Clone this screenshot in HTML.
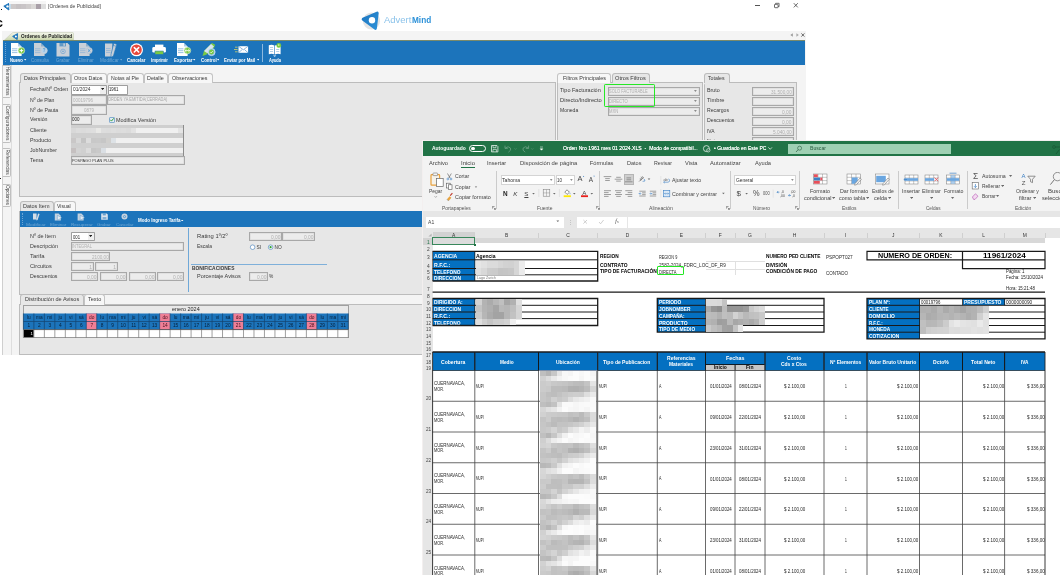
<!DOCTYPE html><html><head><meta charset="utf-8"><title>Ordenes de Publicidad</title><style>
html,body{margin:0;padding:0;background:#fff;}
body{width:1062px;height:575px;overflow:hidden;position:relative;font-family:"Liberation Sans",sans-serif;}
div,span,svg{position:absolute;box-sizing:border-box;}
.in{background:#fff;border:1px solid #9e9e9e;border-radius:0.8px;}
.ro{background:#ececec;border:1px solid #a8a8a8;box-shadow:inset 0 0 0 0.5px #d6d6d6;}
.tab{background:#f7f7f7;border:1px solid #c4c4c4;border-bottom:none;border-radius:3px 3px 0 0;}
.tabsel{background:#e7e7e7;border:1px solid #bcbcbc;border-bottom:none;border-radius:3px 3px 0 0;box-shadow:0 1.2px 0 #e7e7e7;}
.panel{background:#e7e7e7;border:1px solid #bcbcbc;}
</style></head><body><div id="root" style="left:0;top:0;width:1062px;height:575px;will-change:transform;">
<svg style="left:2.6px;top:1.6px" width="8" height="9" viewBox="0 0 8 9"><path d="M0.8 4.2 L6.4 1.2 L5.8 8 Z" fill="#1c74bb" stroke="#1c74bb" stroke-width="1" stroke-linejoin="round"/><circle cx="4.5" cy="4.4" r="1.2" fill="#fff"/></svg>
<div style="left:8.5px;top:1px;width:37px;height:3px;background:#f6f6f6;"></div>
<div style="left:8.5px;top:4px;width:2.5px;height:4.6px;background:#c4dcec;"></div>
<div style="left:11px;top:4px;width:5px;height:4.6px;background:#cdc9c9;"></div>
<div style="left:16px;top:4px;width:5px;height:4.6px;background:#c6c2c4;"></div>
<div style="left:21px;top:4px;width:5px;height:4.6px;background:#c9c5c7;"></div>
<div style="left:26px;top:4px;width:5px;height:4.6px;background:#cfcccc;"></div>
<div style="left:31px;top:4px;width:5px;height:4.6px;background:#dad8d6;"></div>
<div style="left:36px;top:4px;width:5px;height:4.6px;background:#a9a0a8;"></div>
<div style="left:41px;top:4px;width:5px;height:4.6px;background:#dedede;"></div>
<span style="left:48px;top:3.96px;font-size:4.9px;line-height:5.88px;color:#3c3c3c;white-space:nowrap;transform:scaleX(1.013);transform-origin:0 50%;">[Ordenes de Publicidad]</span>
<div style="left:0.8px;top:8.8px;width:1px;height:1.2px;background:#111;"></div>
<span style="top:14.9px;font-size:13.5px;line-height:16.2px;color:#000;white-space:nowrap;font-weight:bold;left:-4.6px;">c</span>
<div style="left:755.3px;top:5px;width:4.6px;height:1px;background:#555;"></div>
<svg style="left:773px;top:2px" width="8" height="8" viewBox="0 0 8 8"><rect x="1.5" y="2.3" width="3.6" height="3.4" rx="0.6" fill="none" stroke="#444" stroke-width="0.8"/><path d="M2.6 2.3V1.3H6.1V4.6H5.1" fill="none" stroke="#444" stroke-width="0.7"/></svg>
<svg style="left:792px;top:2px" width="8" height="8" viewBox="0 0 8 8"><path d="M1.8 1.2L5.8 5.4M5.8 1.2L1.8 5.4" stroke="#444" stroke-width="0.8"/></svg>
<svg style="left:358px;top:8px" width="26" height="26" viewBox="358 8 26 26"><defs><linearGradient id="lg" x1="0" y1="0" x2="1" y2="1"><stop offset="0" stop-color="#1e78c2"/><stop offset="1" stop-color="#2c8fd6"/></linearGradient></defs><circle cx="371.5" cy="21" r="8.6" fill="#d9d9d9" opacity="0.7"/><path d="M363.2 19.2 L377.2 13 L375.4 28.4 Z" fill="url(#lg)" stroke="url(#lg)" stroke-width="3" stroke-linejoin="round"/><circle cx="372" cy="20.3" r="3.2" fill="#fff"/></svg>
<span style="left:384px;top:16.02px;font-size:8.3px;line-height:9.96px;color:#8cc3ea;white-space:nowrap;transform:scaleX(1.142);transform-origin:0 50%;">Advert</span>
<span style="left:412.3px;top:16.02px;font-size:8.3px;line-height:9.96px;color:#2b90d8;white-space:nowrap;transform:scaleX(0.992);transform-origin:0 50%;font-weight:bold;">Mind</span>
<div style="left:2px;top:30.7px;width:803.5px;height:324px;background:#f4f4f4;"></div>
<svg style="left:2px;top:31px" width="74" height="10" viewBox="2 31 74 10"><defs><linearGradient id="tg" x1="0" y1="0" x2="0" y2="1"><stop offset="0" stop-color="#f4f6ec"/><stop offset="1" stop-color="#c6d3a4"/></linearGradient></defs><path d="M3.5 41 L11.6 33.4 Q12.4 32.5 13.6 32.5 H72.5 Q73.5 32.5 73.5 33.5 V41 Z" fill="url(#tg)" stroke="#c6ccb6" stroke-width="0.6"/><path d="M12.6 36.4 L17.6 33.6 L17.2 39.6 Z" fill="#1c74bb" stroke="#1c74bb" stroke-width="0.9" stroke-linejoin="round"/><circle cx="15.9" cy="36.5" r="1" fill="#fff"/></svg>
<span style="left:20.6px;top:33.08px;font-size:5.2px;line-height:6.24px;color:#222;white-space:nowrap;transform:scaleX(0.91);transform-origin:0 50%;font-weight:bold;">Ordenes de Publicidad</span>
<svg style="left:788px;top:32px" width="18" height="6" viewBox="788 32 18 6"><path d="M792.8 33.2v3.6l-2.4-1.8z" fill="#999"/><path d="M796.4 33.2v3.6l2.4-1.8z" fill="#aaa"/><path d="M801.4 33.4l3 3.2M804.4 33.4l-3 3.2" stroke="#333" stroke-width="0.7"/></svg>
<div style="left:3px;top:40.4px;width:802.4px;height:24.2px;background:#1c74bb;border-top:0.6px solid #7a8a6a;"></div>
<div style="left:5px;top:43px;width:1px;height:19px;border-left:1px dotted #6ea6d6;"></div>
<span style="left:10.25px;top:57.52px;font-size:4.8px;line-height:5.76px;color:#fff;white-space:nowrap;transform:scaleX(0.876);transform-origin:0 50%;font-weight:bold;">Nuevo</span>
<svg style="left:24.400000000000002px;top:59.4px" width="2.4" height="1.6" viewBox="0 0 2.4 1.6"><path d="M0 0h2.4l-1.2 1.6z" fill="#fff"/></svg>
<span style="left:31.25px;top:57.52px;font-size:4.8px;line-height:5.76px;color:rgba(255,255,255,0.36);white-space:nowrap;transform:scaleX(0.937);transform-origin:0 50%;">Consulta</span>
<span style="left:55.6px;top:57.52px;font-size:4.8px;line-height:5.76px;color:rgba(255,255,255,0.36);white-space:nowrap;transform:scaleX(0.924);transform-origin:0 50%;">Grabar</span>
<span style="left:77.5px;top:57.52px;font-size:4.8px;line-height:5.76px;color:rgba(255,255,255,0.36);white-space:nowrap;transform:scaleX(0.9);transform-origin:0 50%;">Eliminar</span>
<span style="left:100px;top:57.52px;font-size:4.8px;line-height:5.76px;color:rgba(255,255,255,0.36);white-space:nowrap;transform:scaleX(0.963);transform-origin:0 50%;">Modificar</span>
<svg style="left:120.1px;top:59.4px" width="2.4" height="1.6" viewBox="0 0 2.4 1.6"><path d="M0 0h2.4l-1.2 1.6z" fill="rgba(255,255,255,0.36)"/></svg>
<span style="left:127.25px;top:57.52px;font-size:4.8px;line-height:5.76px;color:#fff;white-space:nowrap;transform:scaleX(0.905);transform-origin:0 50%;font-weight:bold;">Cancelar</span>
<span style="left:150.6px;top:57.52px;font-size:4.8px;line-height:5.76px;color:#fff;white-space:nowrap;transform:scaleX(0.88);transform-origin:0 50%;font-weight:bold;">Imprimir</span>
<span style="left:173.5px;top:57.52px;font-size:4.8px;line-height:5.76px;color:#fff;white-space:nowrap;transform:scaleX(0.932);transform-origin:0 50%;font-weight:bold;">Exportar</span>
<svg style="left:193.20000000000002px;top:59.4px" width="2.4" height="1.6" viewBox="0 0 2.4 1.6"><path d="M0 0h2.4l-1.2 1.6z" fill="#fff"/></svg>
<span style="left:200.6px;top:57.52px;font-size:4.8px;line-height:5.76px;color:#fff;white-space:nowrap;transform:scaleX(0.917);transform-origin:0 50%;font-weight:bold;">Control</span>
<svg style="left:217.0px;top:59.4px" width="2.4" height="1.6" viewBox="0 0 2.4 1.6"><path d="M0 0h2.4l-1.2 1.6z" fill="#fff"/></svg>
<span style="left:224.4px;top:57.52px;font-size:4.8px;line-height:5.76px;color:#fff;white-space:nowrap;transform:scaleX(0.904);transform-origin:0 50%;font-weight:bold;">Enviar por Mail</span>
<svg style="left:256.5px;top:59.4px" width="2.4" height="1.6" viewBox="0 0 2.4 1.6"><path d="M0 0h2.4l-1.2 1.6z" fill="#fff"/></svg>
<span style="left:268.8px;top:57.52px;font-size:4.8px;line-height:5.76px;color:#fff;white-space:nowrap;transform:scaleX(0.828);transform-origin:0 50%;font-weight:bold;">Ayuda</span>
<div style="left:262px;top:44px;width:1px;height:18px;background:#8db9de;"></div>
<svg style="left:0;top:41px" width="300" height="24" viewBox="0 41 300 24"><path d="M11 43h7l3.6 3.6v9.4h-10.6z" fill="#fff"/><path d="M18 43v3.6h3.6z" fill="#1c74bb" opacity="0.35"/><path d="M12 48.8h5.4M12 50.7h5.4M12 52.6h5.4" stroke="#7fb2dc" stroke-width="0.8"/><circle cx="21.4" cy="50.6" r="3.3" fill="#7ac943" stroke="#fff" stroke-width="0.5"/><path d="M19.6 50.6h3.6M21.4 48.8v3.6" stroke="#fff" stroke-width="1"/><path d="M34 43h7l3.6 3.6v9.4h-10.6z" fill="#c9d0d8"/><path d="M41 43v3.6h3.6z" fill="#1c74bb" opacity="0.35"/><path d="M35 48.8h5.4M35 50.7h5.4M35 52.6h5.4" stroke="#8fb4d6" stroke-width="0.8"/><circle cx="44.2" cy="50.6" r="3.1" fill="#b9d4ea" stroke="#c9d0d8" stroke-width="0.7"/><text x="44.2" y="52.3" font-size="4.5" text-anchor="middle" fill="#5b9bd0" font-family="Liberation Sans" font-weight="bold">?</text><path d="M56.5 43h11l2 2v11.5h-13z" fill="#c9d0d8"/><rect x="59.5" y="43" width="6.5" height="3.4" fill="#1c74bb" opacity="0.6"/><rect x="63.4" y="43.4" width="1.5" height="2.4" fill="#c9d0d8"/><circle cx="63" cy="51.4" r="2.3" fill="none" stroke="#6fa4d2" stroke-width="0.7"/><circle cx="63" cy="51.4" r="0.8" fill="#6fa4d2"/><path d="M79 43h7l3.6 3.6v9.4h-10.6z" fill="#c9d0d8"/><path d="M86 43v3.6h3.6z" fill="#1c74bb" opacity="0.35"/><path d="M80 48.8h5.4M80 50.7h5.4M80 52.6h5.4" stroke="#8fb4d6" stroke-width="0.8"/><circle cx="89.2" cy="50.6" r="3.1" fill="#c9d0d8" stroke="#aebfd0" stroke-width="0.5"/><path d="M87.9 49.3l2.6 2.6M90.5 49.3l-2.6 2.6" stroke="#4f9bd8" stroke-width="0.9"/><path d="M105 43.5h7.4v13h-7.4z" fill="#c9d0d8"/><path d="M106 48.6h4.6M106 50.5h4.6M106 52.4h4.6" stroke="#8fb4d6" stroke-width="0.8"/><path d="M113.8 43.2l3 1-3.4 11.8-2.4 1.2 0-2.8z" fill="#c9d0d8" stroke="#1c74bb" stroke-width="0.6"/><path d="M113.4 45.4l2.6 0.9" stroke="#1c74bb" stroke-width="0.5"/><circle cx="136.5" cy="49.8" r="6.5" fill="#fff"/><circle cx="136.5" cy="49.8" r="5.3" fill="#e8483c"/><path d="M134.3 47.6l4.4 4.4M138.7 47.6l-4.4 4.4" stroke="#fff" stroke-width="1.5" stroke-linecap="round"/><rect x="155" y="44.6" width="8.4" height="3" fill="#fff"/><rect x="152.3" y="47" width="13.6" height="5.6" rx="1.4" fill="#fff"/><rect x="155" y="51" width="8.4" height="3.4" fill="#7ac943" stroke="#1c74bb" stroke-width="0.5"/><path d="M177 43h7l3.6 3.6v9.4h-10.6z" fill="#fff"/><path d="M184 43v3.6h3.6z" fill="#1c74bb" opacity="0.35"/><path d="M178 48.8h5.4M178 50.7h5.4M178 52.6h5.4" stroke="#7fb2dc" stroke-width="0.8"/><circle cx="187.4" cy="50.6" r="3.3" fill="#7ac943" stroke="#fff" stroke-width="0.5"/><path d="M185.2 50.6h4.4M188.3 49.2l1.5 1.4-1.5 1.4M186.5 49.2l-1.5 1.4 1.5 1.4" stroke="#fff" stroke-width="0.8" fill="none"/><path d="M202.5 56l1.5-5 8-8 3.2 1.8-1 2.4-7.6 7.2z" fill="#7ac943"/><path d="M204 51l7-7 3 2.4-6.6 6.8z" fill="#d7e4f0"/><circle cx="211.5" cy="52" r="3.6" fill="#8cc0e6" stroke="#d7e4f0" stroke-width="0.8"/><circle cx="211.5" cy="52" r="2.4" fill="#7ac943"/><path d="M210.3 52l0.9 0.9 1.6-1.8" stroke="#fff" stroke-width="0.7" fill="none"/><rect x="238.5" y="46.2" width="9.6" height="6.6" fill="#fff"/><path d="M238.5 46.2l4.8 3.6 4.8-3.6M238.5 52.8l3.6-3.2M248.1 52.8l-3.6-3.2" stroke="#1c74bb" stroke-width="0.5" fill="none"/><path d="M235 47.2h2.6M234 49.5h3.6M235 51.8h2.6" stroke="#d8d36a" stroke-width="0.8"/><path d="M268.8 45.2q3-1.2 5.6 0.4v9q-2.6-1.4-5.6-0.3z" fill="#fff"/><path d="M280.6 45.2q-3-1.2-5.6 0.4v9q2.6-1.4 5.6-0.3z" fill="#fff"/><path d="M270 47.5h3M270 49.5h3M270 51.5h3M276.2 49.5h3M276.2 51.5h3" stroke="#1c74bb" stroke-width="0.5" opacity="0.7"/><path d="M273 55.4l1.7 1.4 1.7-1.4" fill="#fff"/><circle cx="278.8" cy="45.4" r="2.4" fill="#7ac943"/><path d="M278.8 44.2v1.8" stroke="#fff" stroke-width="0.7"/></svg>
<div style="left:2px;top:65px;width:1.2px;height:290px;background:#cfcfcf;"></div>
<div style="left:3px;top:64.6px;width:8px;height:33.2px;background:#f6f6f6;border:0.8px solid #c0c0c0;border-left:none;border-radius:0 2px 2px 0;"></div>
<span style="left:7.3px;top:81.19999999999999px;font-size:4.7px;line-height:6px;color:#444;white-space:nowrap;letter-spacing:0.066px;transform:translate(-50%,-50%) rotate(90deg);">Herramientas</span>
<div style="left:3px;top:103.5px;width:8px;height:39px;background:#f6f6f6;border:0.8px solid #c0c0c0;border-left:none;border-radius:0 2px 2px 0;"></div>
<span style="left:7.3px;top:123.0px;font-size:4.7px;line-height:6px;color:#444;white-space:nowrap;letter-spacing:0.069px;transform:translate(-50%,-50%) rotate(90deg);">Configuraciones</span>
<div style="left:3px;top:147.5px;width:8px;height:29px;background:#f6f6f6;border:0.8px solid #c0c0c0;border-left:none;border-radius:0 2px 2px 0;"></div>
<span style="left:7.3px;top:162.0px;font-size:4.7px;line-height:6px;color:#444;white-space:nowrap;letter-spacing:-0.007px;transform:translate(-50%,-50%) rotate(90deg);">Referencias</span>
<div style="left:3px;top:183.5px;width:8px;height:23.5px;background:#f6f6f6;border:0.8px solid #c0c0c0;border-left:none;border-radius:0 2px 2px 0;"></div>
<span style="left:7.3px;top:195.25px;font-size:4.7px;line-height:6px;color:#444;white-space:nowrap;letter-spacing:0.018px;transform:translate(-50%,-50%) rotate(90deg);">Opciones</span>
<div style="left:0px;top:177.6px;width:1.2px;height:1.4px;background:#222;"></div>
<div style="left:11.4px;top:65px;width:0.8px;height:290px;background:#dedede;"></div>
<div class="panel" style="left:19px;top:82.2px;width:537px;height:115.3px;"></div>
<div class="tabsel" style="left:20px;top:72.5px;width:50.5px;height:10.5px;"></div>
<span style="left:23.75px;top:74.79px;font-size:5.6px;line-height:6.72px;color:#3a3a3a;white-space:nowrap;transform:scaleX(0.958);transform-origin:0 50%;">Datos Principales</span>
<div class="tab" style="left:71px;top:72.5px;width:35.5px;height:10.5px;"></div>
<span style="left:74px;top:74.79px;font-size:5.6px;line-height:6.72px;color:#3a3a3a;white-space:nowrap;transform:scaleX(0.954);transform-origin:0 50%;">Otros Datos</span>
<div class="tab" style="left:107px;top:72.5px;width:36.5px;height:10.5px;"></div>
<span style="left:110.75px;top:74.79px;font-size:5.6px;line-height:6.72px;color:#3a3a3a;white-space:nowrap;transform:scaleX(0.927);transform-origin:0 50%;">Notas al Pie</span>
<div class="tab" style="left:144px;top:72.5px;width:23.5px;height:10.5px;"></div>
<span style="left:147px;top:74.79px;font-size:5.6px;line-height:6.72px;color:#3a3a3a;white-space:nowrap;transform:scaleX(0.961);transform-origin:0 50%;">Detalle</span>
<div class="tab" style="left:168px;top:72.5px;width:44.5px;height:10.5px;"></div>
<span style="left:172px;top:74.79px;font-size:5.6px;line-height:6.72px;color:#3a3a3a;white-space:nowrap;transform:scaleX(0.95);transform-origin:0 50%;">Observaciones</span>
<span style="left:30px;top:86.24px;font-size:5.6px;line-height:6.72px;color:#3a3a3a;white-space:nowrap;transform:scaleX(0.948);transform-origin:0 50%;">Fecha/N&ordm; Orden</span>
<span style="left:30px;top:96.64px;font-size:5.6px;line-height:6.72px;color:#3a3a3a;white-space:nowrap;transform:scaleX(0.92);transform-origin:0 50%;">N&ordm; de Plan</span>
<span style="left:30px;top:106.64px;font-size:5.6px;line-height:6.72px;color:#3a3a3a;white-space:nowrap;transform:scaleX(0.94);transform-origin:0 50%;">N&ordm; de Pauta</span>
<span style="left:30px;top:116.24px;font-size:5.6px;line-height:6.72px;color:#3a3a3a;white-space:nowrap;transform:scaleX(0.937);transform-origin:0 50%;">Versi&oacute;n</span>
<span style="left:30px;top:126.64px;font-size:5.6px;line-height:6.72px;color:#3a3a3a;white-space:nowrap;transform:scaleX(0.961);transform-origin:0 50%;">Cliente</span>
<span style="left:30px;top:136.64px;font-size:5.6px;line-height:6.72px;color:#3a3a3a;white-space:nowrap;transform:scaleX(0.948);transform-origin:0 50%;">Producto</span>
<span style="left:30px;top:146.64px;font-size:5.6px;line-height:6.72px;color:#3a3a3a;white-space:nowrap;transform:scaleX(0.933);transform-origin:0 50%;">JobNumber</span>
<span style="left:30px;top:156.64px;font-size:5.6px;line-height:6.72px;color:#3a3a3a;white-space:nowrap;transform:scaleX(0.968);transform-origin:0 50%;">Tema</span>
<div class="in" style="left:71px;top:85px;width:36px;height:9.5px;"></div>
<div style="left:99.6px;top:86px;width:6.4px;height:7.5px;background:#efefef;"></div>
<span style="left:72.5px;top:87.18px;font-size:4.7px;line-height:5.64px;color:#333;white-space:nowrap;transform:scaleX(1.03);transform-origin:0 50%;">01/2024</span>
<svg style="left:101px;top:88.2px" width="3.2" height="2.2" viewBox="0 0 3.2 2.2"><path d="M0 0h3.2l-1.6 2.2z" fill="#222"/></svg>
<div class="in" style="left:107.5px;top:85px;width:20px;height:9.5px;"></div>
<span style="left:108.9px;top:87.18px;font-size:4.7px;line-height:5.64px;color:#222;white-space:nowrap;transform:scaleX(0.909);transform-origin:0 50%;">1961</span>
<div class="ro" style="left:71px;top:95.2px;width:35.5px;height:9.4px;"></div>
<span style="left:72.5px;top:97.1px;font-size:5px;line-height:6.0px;color:#b2b2b2;white-space:nowrap;transform:scaleX(0.899);transform-origin:0 50%;">00019796</span>
<div class="ro" style="left:107px;top:95.2px;width:77.5px;height:9.4px;"></div>
<span style="left:108px;top:97.22px;font-size:4.8px;line-height:5.76px;color:#a8a8a8;white-space:nowrap;transform:scaleX(0.828);transform-origin:0 50%;">ORDEN YA EMITIDA(CERRADA)</span>
<div class="ro" style="left:71px;top:105.4px;width:35.5px;height:9.4px;"></div>
<span style="left:83.75px;top:107.2px;font-size:5px;line-height:6.0px;color:#b2b2b2;white-space:nowrap;transform:scaleX(0.899);transform-origin:0 50%;">0879</span>
<div class="ro" style="left:71px;top:115.3px;width:21px;height:9.4px;"></div>
<span style="left:72px;top:117.3px;font-size:4.5px;line-height:5.4px;color:#222;white-space:nowrap;transform:scaleX(0.999);transform-origin:0 50%;">000</span>
<div style="left:109px;top:117px;width:5.6px;height:5.6px;background:#e2edf7;border:1px solid #86add0;border-radius:1px;"></div>
<svg style="left:109px;top:117px" width="6" height="6" viewBox="0 0 6 6"><path d="M1.3 2.8l1.2 1.3 2.2-2.8" stroke="#2a9a2a" stroke-width="0.9" fill="none"/></svg>
<span style="left:115.5px;top:117.44px;font-size:5.6px;line-height:6.72px;color:#3a3a3a;white-space:nowrap;transform:scaleX(0.974);transform-origin:0 50%;">Modifica Versi&oacute;n</span>
<div style="left:71.2px;top:125px;width:113.3px;height:30.8px;background:#cfcfcf;border-right:1px solid #8c8c8c;"></div>
<div style="left:71.2px;top:127.6px;width:112.3px;height:5.6px;background:#f0f0f0;"></div>
<div style="left:71.2px;top:127.6px;width:5px;height:5.6px;background:#d8d8d8;"></div>
<div style="left:76.2px;top:127.6px;width:5px;height:5.6px;background:#dcdcdc;"></div>
<div style="left:81.2px;top:127.6px;width:5px;height:5.6px;background:#dbdbdb;"></div>
<div style="left:86.2px;top:127.6px;width:5px;height:5.6px;background:#dddddd;"></div>
<div style="left:91.2px;top:127.6px;width:5px;height:5.6px;background:#dedede;"></div>
<div style="left:96.2px;top:127.6px;width:5px;height:5.6px;background:#e8e8e6;"></div>
<div style="left:101.2px;top:127.6px;width:5px;height:5.6px;background:#dddddd;"></div>
<div style="left:106.2px;top:127.6px;width:5px;height:5.6px;background:#dcdcdc;"></div>
<div style="left:111.2px;top:127.6px;width:5px;height:5.6px;background:#dedede;"></div>
<div style="left:116.2px;top:127.6px;width:5px;height:5.6px;background:#dcdcdc;"></div>
<div style="left:121.2px;top:127.6px;width:5px;height:5.6px;background:#dddddd;"></div>
<div style="left:126.2px;top:127.6px;width:5px;height:5.6px;background:#dbdbdb;"></div>
<div style="left:131.2px;top:127.6px;width:5px;height:5.6px;background:#e2e2e2;"></div>
<div style="left:178.4px;top:127.6px;width:5px;height:5.6px;background:#e4e4e4;"></div>
<div style="left:71.2px;top:137.6px;width:112.3px;height:5.4px;background:#f0f0f0;"></div>
<div style="left:71.2px;top:137.6px;width:5px;height:5.4px;background:#c9c7c7;"></div>
<div style="left:76.2px;top:137.6px;width:5px;height:5.4px;background:#d8d8d8;"></div>
<div style="left:81.2px;top:137.6px;width:5px;height:5.4px;background:#c4c4c4;"></div>
<div style="left:86.2px;top:137.6px;width:5px;height:5.4px;background:#dcdcdc;"></div>
<div style="left:91.2px;top:137.6px;width:5px;height:5.4px;background:#c8c8c8;"></div>
<div style="left:96.2px;top:137.6px;width:5px;height:5.4px;background:#c9c9c9;"></div>
<div style="left:101.2px;top:137.6px;width:5px;height:5.4px;background:#c6c6c6;"></div>
<div style="left:106.2px;top:137.6px;width:5px;height:5.4px;background:#d0cfcd;"></div>
<div style="left:111.2px;top:137.6px;width:5px;height:5.4px;background:#dde2e6;"></div>
<div style="left:71.2px;top:147.6px;width:112.3px;height:5.4px;background:#f0f0f0;"></div>
<div style="left:71.2px;top:147.6px;width:5px;height:5.4px;background:#c5c0c0;"></div>
<div style="left:76.2px;top:147.6px;width:5px;height:5.4px;background:#d3d3d3;"></div>
<div style="left:81.2px;top:147.6px;width:5px;height:5.4px;background:#d0d0d0;"></div>
<div style="left:86.2px;top:147.6px;width:5px;height:5.4px;background:#dcdcdc;"></div>
<div style="left:91.2px;top:147.6px;width:5px;height:5.4px;background:#c6c6c6;"></div>
<div style="left:96.2px;top:147.6px;width:5px;height:5.4px;background:#c9c9c9;"></div>
<div style="left:101.2px;top:147.6px;width:5px;height:5.4px;background:#dadfe4;"></div>
<div class="ro" style="left:71px;top:155.8px;width:113.5px;height:9px;"></div>
<span style="left:72px;top:157.96px;font-size:4.4px;line-height:5.28px;color:#333;white-space:nowrap;transform:scaleX(0.886);transform-origin:0 50%;">POSPAGO PLAN PLUS</span>
<div class="panel" style="left:557px;top:82.2px;width:146px;height:120px;"></div>
<div class="tab" style="left:557px;top:72.5px;width:53.5px;height:10.5px;"></div>
<span style="left:562.5px;top:74.84px;font-size:5.6px;line-height:6.72px;color:#3a3a3a;white-space:nowrap;transform:scaleX(0.973);transform-origin:0 50%;">Filtros Principales</span>
<div class="tabsel" style="left:611.5px;top:72.5px;width:38.5px;height:10.5px;"></div>
<span style="left:615px;top:74.84px;font-size:5.6px;line-height:6.72px;color:#3a3a3a;white-space:nowrap;transform:scaleX(1.008);transform-origin:0 50%;">Otros Filtros</span>
<span style="left:560px;top:87.04px;font-size:5.6px;line-height:6.72px;color:#3a3a3a;white-space:nowrap;transform:scaleX(0.982);transform-origin:0 50%;">Tipo Facturaci&oacute;n</span>
<span style="left:560px;top:97.04px;font-size:5.6px;line-height:6.72px;color:#3a3a3a;white-space:nowrap;transform:scaleX(1.024);transform-origin:0 50%;">Directo/Indirecto</span>
<span style="left:560px;top:107.04px;font-size:5.6px;line-height:6.72px;color:#3a3a3a;white-space:nowrap;transform:scaleX(0.902);transform-origin:0 50%;">Moneda</span>
<div class="ro" style="left:607.5px;top:87.4px;width:92px;height:8.8px;"></div>
<span style="left:608.75px;top:89.06px;font-size:4.9px;line-height:5.88px;color:#aeaeae;white-space:nowrap;transform:scaleX(0.823);transform-origin:0 50%;">SOLO FACTURABLE</span>
<svg style="left:694.2px;top:90.4px" width="2.8" height="2" viewBox="0 0 2.8 2"><path d="M0 0h2.8l-1.4 2z" fill="#8a8a8a"/></svg>
<div class="ro" style="left:607.5px;top:97.4px;width:92px;height:8.8px;"></div>
<span style="left:608.75px;top:99.06px;font-size:4.9px;line-height:5.88px;color:#aeaeae;white-space:nowrap;transform:scaleX(0.854);transform-origin:0 50%;">DIRECTO</span>
<svg style="left:694.2px;top:100.4px" width="2.8" height="2" viewBox="0 0 2.8 2"><path d="M0 0h2.8l-1.4 2z" fill="#8a8a8a"/></svg>
<div class="ro" style="left:607.5px;top:107.4px;width:92px;height:8.8px;"></div>
<span style="left:608.75px;top:109.06px;font-size:4.9px;line-height:5.88px;color:#aeaeae;white-space:nowrap;transform:scaleX(0.849);transform-origin:0 50%;">MXN</span>
<svg style="left:694.2px;top:110.4px" width="2.8" height="2" viewBox="0 0 2.8 2"><path d="M0 0h2.8l-1.4 2z" fill="#8a8a8a"/></svg>
<div style="left:603.8px;top:83.6px;width:51px;height:23.6px;border:1.2px solid #25e825;border-radius:1.2px;"></div>
<div class="panel" style="left:704px;top:82.2px;width:93px;height:120px;"></div>
<div class="tabsel" style="left:704px;top:72.5px;width:25.5px;height:10.5px;"></div>
<span style="left:708px;top:74.84px;font-size:5.6px;line-height:6.72px;color:#3a3a3a;white-space:nowrap;transform:scaleX(0.93);transform-origin:0 50%;">Totales</span>
<span style="left:707px;top:87.34px;font-size:5.6px;line-height:6.72px;color:#3a3a3a;white-space:nowrap;transform:scaleX(0.953);transform-origin:0 50%;">Bruto</span>
<div class="ro" style="left:752px;top:87.0px;width:41.5px;height:9px;"></div>
<span style="left:770.65px;top:88.7px;font-size:5px;line-height:6.0px;color:#aeaeae;white-space:nowrap;transform:scaleX(0.933);transform-origin:0 50%;">31.500,00</span>
<span style="left:707px;top:97.39px;font-size:5.6px;line-height:6.72px;color:#3a3a3a;white-space:nowrap;transform:scaleX(1.016);transform-origin:0 50%;">Timbre</span>
<div class="ro" style="left:752px;top:97.05px;width:41.5px;height:9px;"></div>
<span style="left:707px;top:107.44px;font-size:5.6px;line-height:6.72px;color:#3a3a3a;white-space:nowrap;transform:scaleX(0.918);transform-origin:0 50%;">Recargos</span>
<div class="ro" style="left:752px;top:107.10000000000001px;width:41.5px;height:9px;"></div>
<span style="left:781.9px;top:108.8px;font-size:5px;line-height:6.0px;color:#aeaeae;white-space:nowrap;transform:scaleX(0.976);transform-origin:0 50%;">0,00</span>
<span style="left:707px;top:117.49px;font-size:5.6px;line-height:6.72px;color:#3a3a3a;white-space:nowrap;transform:scaleX(0.93);transform-origin:0 50%;">Descuentos</span>
<div class="ro" style="left:752px;top:117.15px;width:41.5px;height:9px;"></div>
<span style="left:781.9px;top:118.85px;font-size:5px;line-height:6.0px;color:#aeaeae;white-space:nowrap;transform:scaleX(0.976);transform-origin:0 50%;">0,00</span>
<span style="left:707px;top:127.54px;font-size:5.6px;line-height:6.72px;color:#3a3a3a;white-space:nowrap;transform:scaleX(0.871);transform-origin:0 50%;">IVA</span>
<div class="ro" style="left:752px;top:127.2px;width:41.5px;height:9px;"></div>
<span style="left:772.65px;top:128.9px;font-size:5px;line-height:6.0px;color:#aeaeae;white-space:nowrap;transform:scaleX(0.963);transform-origin:0 50%;">5.040,00</span>
<span style="left:707px;top:137.59px;font-size:5.6px;line-height:6.72px;color:#3a3a3a;white-space:nowrap;transform:scaleX(0.909);transform-origin:0 50%;">Neto</span>
<div class="ro" style="left:752px;top:137.25px;width:41.5px;height:9px;"></div>
<span style="left:770.65px;top:138.95px;font-size:5px;line-height:6.0px;color:#aeaeae;white-space:nowrap;transform:scaleX(0.933);transform-origin:0 50%;">36.540,00</span>
<div class="panel" style="left:19px;top:210.5px;width:404px;height:84px;"></div>
<div class="tabsel" style="left:20px;top:200.5px;width:33.5px;height:10.5px;"></div>
<span style="left:23px;top:202.84px;font-size:5.6px;line-height:6.72px;color:#3a3a3a;white-space:nowrap;transform:scaleX(0.979);transform-origin:0 50%;">Datos Item</span>
<div class="tab" style="left:54px;top:200.5px;width:21.5px;height:10.5px;"></div>
<span style="left:57px;top:202.84px;font-size:5.6px;line-height:6.72px;color:#3a3a3a;white-space:nowrap;transform:scaleX(0.907);transform-origin:0 50%;">Visual</span>
<div style="left:20px;top:211px;width:403px;height:16px;background:#1c74bb;"></div>
<div style="left:22px;top:213px;width:1px;height:12px;border-left:1px dotted #6ea6d6;"></div>
<span style="left:25.75px;top:221.56px;font-size:4.4px;line-height:5.28px;color:rgba(255,255,255,0.34);white-space:nowrap;transform:scaleX(1.106);transform-origin:0 50%;">Modificar</span>
<span style="left:50px;top:221.56px;font-size:4.4px;line-height:5.28px;color:rgba(255,255,255,0.34);white-space:nowrap;transform:scaleX(1.022);transform-origin:0 50%;">Eliminar</span>
<span style="left:70.75px;top:221.56px;font-size:4.4px;line-height:5.28px;color:rgba(255,255,255,0.34);white-space:nowrap;transform:scaleX(1.059);transform-origin:0 50%;">Recuperar</span>
<span style="left:97px;top:221.56px;font-size:4.4px;line-height:5.28px;color:rgba(255,255,255,0.34);white-space:nowrap;transform:scaleX(1.004);transform-origin:0 50%;">Grabar</span>
<span style="left:115.5px;top:221.56px;font-size:4.4px;line-height:5.28px;color:rgba(255,255,255,0.34);white-space:nowrap;transform:scaleX(0.994);transform-origin:0 50%;">Cancelar</span>
<span style="left:137.5px;top:217.5px;font-size:4.5px;line-height:5.4px;color:#fff;white-space:nowrap;transform:scaleX(0.996);transform-origin:0 50%;font-weight:bold;">Modo Ingreso Tarifa</span>
<svg style="left:181.2px;top:219.6px" width="2.4" height="1.6" viewBox="0 0 2.4 1.6"><path d="M0 0h2.4l-1.2 1.6z" fill="#fff"/></svg>
<svg style="left:20px;top:211px" width="140" height="16" viewBox="20 211 140 16"><path d="M33 213.6h3.6v6h-3.6z M38 213.4l1.6 0.5-2 6-1.3 0.6z" fill="#d5dde6"/><path d="M54.8 213.6h3.8l2.2 2.2v4.6h-6z" fill="#c3d2e0"/><path d="M57.4 215.4l4.6 2.4-4.6 2.4z" fill="#e4ebf2" stroke="#1c74bb" stroke-width="0.3"/><path d="M77.6 213.6h3.8l2.2 2.2v4.6h-6z" fill="#c3d2e0"/><path d="M80.2 215.4l4.6 2.4-4.6 2.4z" fill="#e4ebf2" stroke="#1c74bb" stroke-width="0.3"/><path d="M101.2 213.6h5.6l1 1v5.2h-6.6z" fill="#dbe3ec"/><rect x="102.8" y="213.6" width="3" height="1.8" fill="#1c74bb" opacity="0.6"/><rect x="102.6" y="217" width="3.8" height="2.2" fill="#1c74bb" opacity="0.45"/><circle cx="124.5" cy="216.6" r="3" fill="#c9d4df"/><circle cx="124.5" cy="216.6" r="1.6" fill="#1c74bb" opacity="0.5"/><path d="M123.7 215.8l1.6 1.6M125.3 215.8l-1.6 1.6" stroke="#dfe6ee" stroke-width="0.5"/></svg>
<span style="left:30px;top:232.64px;font-size:5.6px;line-height:6.72px;color:#3a3a3a;white-space:nowrap;transform:scaleX(0.978);transform-origin:0 50%;">N&ordm; de Item</span>
<span style="left:30px;top:242.64px;font-size:5.6px;line-height:6.72px;color:#3a3a3a;white-space:nowrap;transform:scaleX(0.957);transform-origin:0 50%;">Descripci&oacute;n</span>
<span style="left:30px;top:253.14px;font-size:5.6px;line-height:6.72px;color:#3a3a3a;white-space:nowrap;transform:scaleX(1.059);transform-origin:0 50%;">Tarifa</span>
<span style="left:30px;top:263.14px;font-size:5.6px;line-height:6.72px;color:#3a3a3a;white-space:nowrap;transform:scaleX(0.998);transform-origin:0 50%;">Circuitos</span>
<span style="left:30px;top:273.14px;font-size:5.6px;line-height:6.72px;color:#3a3a3a;white-space:nowrap;transform:scaleX(0.93);transform-origin:0 50%;">Descuentos</span>
<div class="in" style="left:71px;top:232.3px;width:23.5px;height:8.9px;"></div>
<div style="left:87.6px;top:233.2px;width:6px;height:7px;background:#efefef;"></div>
<span style="left:72.5px;top:233.9px;font-size:5px;line-height:6.0px;color:#222;white-space:nowrap;transform:scaleX(0.839);transform-origin:0 50%;">001</span>
<svg style="left:89px;top:235.2px" width="3.2" height="2.2" viewBox="0 0 3.2 2.2"><path d="M0 0h3.2l-1.6 2.2z" fill="#222"/></svg>
<div class="ro" style="left:71px;top:242.3px;width:113px;height:8.9px;"></div>
<span style="left:72px;top:244.02px;font-size:4.8px;line-height:5.76px;color:#b0b0b0;white-space:nowrap;transform:scaleX(0.833);transform-origin:0 50%;">INTEGRAL</span>
<div class="ro" style="left:71px;top:252.3px;width:38.5px;height:8.9px;"></div>
<span style="left:92px;top:254.0px;font-size:5px;line-height:6.0px;color:#b0b0b0;white-space:nowrap;transform:scaleX(0.927);transform-origin:0 50%;">2100,00</span>
<div class="ro" style="left:71px;top:262.3px;width:22.5px;height:8.9px;"></div>
<span style="top:264.0px;font-size:5px;line-height:6.0px;color:#b0b0b0;white-space:nowrap;right:970px;text-align:right;">1</span>
<div class="ro" style="left:95px;top:262.3px;width:22.5px;height:8.9px;"></div>
<span style="top:264.0px;font-size:5px;line-height:6.0px;color:#b0b0b0;white-space:nowrap;right:946px;text-align:right;">1</span>
<div class="ro" style="left:71px;top:272.3px;width:26.5px;height:8.9px;"></div>
<span style="left:86.5px;top:274.0px;font-size:5px;line-height:6.0px;color:#b0b0b0;white-space:nowrap;transform:scaleX(0.976);transform-origin:0 50%;">0,00</span>
<div class="ro" style="left:100px;top:272.3px;width:26.5px;height:8.9px;"></div>
<span style="left:115.5px;top:274.0px;font-size:5px;line-height:6.0px;color:#b0b0b0;white-space:nowrap;transform:scaleX(0.976);transform-origin:0 50%;">0,00</span>
<div class="ro" style="left:129px;top:272.3px;width:26.5px;height:8.9px;"></div>
<span style="left:144.5px;top:274.0px;font-size:5px;line-height:6.0px;color:#b0b0b0;white-space:nowrap;transform:scaleX(0.976);transform-origin:0 50%;">0,00</span>
<div class="ro" style="left:157px;top:272.3px;width:26.5px;height:8.9px;"></div>
<span style="left:172.5px;top:274.0px;font-size:5px;line-height:6.0px;color:#b0b0b0;white-space:nowrap;transform:scaleX(0.976);transform-origin:0 50%;">0,00</span>
<div style="left:188px;top:228px;width:1px;height:64px;background:#6fa8d8;"></div>
<span style="left:196.75px;top:232.64px;font-size:5.6px;line-height:6.72px;color:#3a3a3a;white-space:nowrap;transform:scaleX(1.038);transform-origin:0 50%;">Rating 1&ordm;/2&ordm;</span>
<span style="left:196.75px;top:242.64px;font-size:5.6px;line-height:6.72px;color:#3a3a3a;white-space:nowrap;transform:scaleX(0.892);transform-origin:0 50%;">Escala</span>
<div class="ro" style="left:249px;top:232px;width:32.5px;height:9.3px;"></div>
<span style="left:270.5px;top:234.0px;font-size:5px;line-height:6.0px;color:#b0b0b0;white-space:nowrap;transform:scaleX(0.976);transform-origin:0 50%;">0,00</span>
<div class="ro" style="left:282px;top:232px;width:32.5px;height:9.3px;"></div>
<span style="left:303.5px;top:234.0px;font-size:5px;line-height:6.0px;color:#b0b0b0;white-space:nowrap;transform:scaleX(0.976);transform-origin:0 50%;">0,00</span>
<svg style="left:249px;top:243px" width="40" height="9" viewBox="249 243 40 9"><circle cx="252.6" cy="247.2" r="2.3" fill="#fff" stroke="#3d7ab8" stroke-width="0.6"/><circle cx="270.6" cy="247.2" r="2.3" fill="#fff" stroke="#3d7ab8" stroke-width="0.6"/><circle cx="270.6" cy="247.2" r="1.1" fill="#2fa02f"/></svg>
<span style="top:244.82px;font-size:4.8px;line-height:5.76px;color:#3a3a3a;white-space:nowrap;left:256.5px;">SI</span>
<span style="top:244.82px;font-size:4.8px;line-height:5.76px;color:#3a3a3a;white-space:nowrap;left:274.5px;">NO</span>
<div style="left:191px;top:263.5px;width:136px;height:1px;background:#7fb0da;"></div>
<span style="left:192px;top:265.28px;font-size:5.2px;line-height:6.24px;color:#3a3a3a;white-space:nowrap;transform:scaleX(0.943);transform-origin:0 50%;font-weight:bold;">BONIFICACIONES</span>
<span style="left:196.75px;top:273.14px;font-size:5.6px;line-height:6.72px;color:#3a3a3a;white-space:nowrap;transform:scaleX(0.985);transform-origin:0 50%;">Porcentaje Avisos</span>
<div class="ro" style="left:249px;top:272px;width:18.5px;height:9.3px;"></div>
<span style="left:256.5px;top:274.0px;font-size:5px;line-height:6.0px;color:#b0b0b0;white-space:nowrap;transform:scaleX(0.976);transform-origin:0 50%;">0,00</span>
<span style="top:274.32px;font-size:4.8px;line-height:5.76px;color:#3a3a3a;white-space:nowrap;left:269px;">%</span>
<div class="panel" style="left:19px;top:304px;width:404px;height:51px;"></div>
<div class="tabsel" style="left:20px;top:294px;width:63.5px;height:10.5px;"></div>
<span style="left:24.5px;top:296.44px;font-size:5.6px;line-height:6.72px;color:#3a3a3a;white-space:nowrap;transform:scaleX(0.992);transform-origin:0 50%;">Distribuci&oacute;n de Avisos</span>
<div class="tab" style="left:84px;top:294px;width:20.5px;height:10.5px;"></div>
<span style="left:87.5px;top:296.44px;font-size:5.6px;line-height:6.72px;color:#3a3a3a;white-space:nowrap;transform:scaleX(0.99);transform-origin:0 50%;">Texto</span>
<div style="left:23px;top:305px;width:325.8px;height:33.2px;background:#e9e9e9;border:0.8px solid #a0a0a0;"></div>
<span style="left:171.5px;top:306.14px;font-size:5.6px;line-height:6.72px;color:#222;white-space:nowrap;transform:scaleX(0.979);transform-origin:0 50%;">enero 2024</span>
<svg style="left:20px;top:310px" width="332" height="30" viewBox="20 310 332 30"><rect x="23.4" y="313.5" width="324.90" height="16.100000000000023" fill="#1c74bb"/><rect x="23.4" y="329.6" width="324.90" height="8.199999999999989" fill="#fff"/><rect x="86.28" y="313.5" width="10.48" height="16.100000000000023" fill="#ef7f96"/><rect x="159.65" y="313.5" width="10.48" height="16.100000000000023" fill="#ef7f96"/><rect x="233.01" y="313.5" width="10.48" height="16.100000000000023" fill="#ef7f96"/><rect x="306.38" y="313.5" width="10.48" height="16.100000000000023" fill="#ef7f96"/><path d="M23.40 313.5V329.6M33.88 313.5V329.6M44.36 313.5V329.6M54.84 313.5V329.6M65.32 313.5V329.6M75.80 313.5V329.6M86.28 313.5V329.6M96.76 313.5V329.6M107.25 313.5V329.6M117.73 313.5V329.6M128.21 313.5V329.6M138.69 313.5V329.6M149.17 313.5V329.6M159.65 313.5V329.6M170.13 313.5V329.6M180.61 313.5V329.6M191.09 313.5V329.6M201.57 313.5V329.6M212.05 313.5V329.6M222.53 313.5V329.6M233.01 313.5V329.6M243.49 313.5V329.6M253.97 313.5V329.6M264.45 313.5V329.6M274.94 313.5V329.6M285.42 313.5V329.6M295.90 313.5V329.6M306.38 313.5V329.6M316.86 313.5V329.6M327.34 313.5V329.6M337.82 313.5V329.6M348.30 313.5V329.6M23.4 321.5H348.30" stroke="#14446f" stroke-width="0.7" fill="none"/><path d="M23.4 329.6H348.30" stroke="#333" stroke-width="0.7" fill="none"/><path d="M23.40 329.6V337.8M33.88 329.6V337.8M44.36 329.6V337.8M54.84 329.6V337.8M65.32 329.6V337.8M75.80 329.6V337.8M86.28 329.6V337.8M96.76 329.6V337.8M107.25 329.6V337.8M117.73 329.6V337.8M128.21 329.6V337.8M138.69 329.6V337.8M149.17 329.6V337.8M159.65 329.6V337.8M170.13 329.6V337.8M180.61 329.6V337.8M191.09 329.6V337.8M201.57 329.6V337.8M212.05 329.6V337.8M222.53 329.6V337.8M233.01 329.6V337.8M243.49 329.6V337.8M253.97 329.6V337.8M264.45 329.6V337.8M274.94 329.6V337.8M285.42 329.6V337.8M295.90 329.6V337.8M306.38 329.6V337.8M316.86 329.6V337.8M327.34 329.6V337.8M337.82 329.6V337.8M348.30 329.6V337.8M23.4 337.5H348.30" stroke="#777" stroke-width="0.7" fill="none"/><rect x="23.9" y="330.0" width="9.58" height="7.199999999999989" fill="#000"/></svg>
<span style="top:314.82px;font-size:4.8px;line-height:5.76px;color:#06203a;white-space:nowrap;left:-71.15967741935484px;width:200px;text-align:center;">lu</span>
<span style="top:322.87px;font-size:4.8px;line-height:5.76px;color:#06203a;white-space:nowrap;left:-71.15967741935484px;width:200px;text-align:center;">1</span>
<span style="top:314.82px;font-size:4.8px;line-height:5.76px;color:#06203a;white-space:nowrap;left:-60.67903225806451px;width:200px;text-align:center;">ma</span>
<span style="top:322.87px;font-size:4.8px;line-height:5.76px;color:#06203a;white-space:nowrap;left:-60.67903225806451px;width:200px;text-align:center;">2</span>
<span style="top:314.82px;font-size:4.8px;line-height:5.76px;color:#06203a;white-space:nowrap;left:-50.19838709677419px;width:200px;text-align:center;">mi</span>
<span style="top:322.87px;font-size:4.8px;line-height:5.76px;color:#06203a;white-space:nowrap;left:-50.19838709677419px;width:200px;text-align:center;">3</span>
<span style="top:314.82px;font-size:4.8px;line-height:5.76px;color:#06203a;white-space:nowrap;left:-39.717741935483865px;width:200px;text-align:center;">ju</span>
<span style="top:322.87px;font-size:4.8px;line-height:5.76px;color:#06203a;white-space:nowrap;left:-39.717741935483865px;width:200px;text-align:center;">4</span>
<span style="top:314.82px;font-size:4.8px;line-height:5.76px;color:#06203a;white-space:nowrap;left:-29.237096774193546px;width:200px;text-align:center;">vi</span>
<span style="top:322.87px;font-size:4.8px;line-height:5.76px;color:#06203a;white-space:nowrap;left:-29.237096774193546px;width:200px;text-align:center;">5</span>
<span style="top:314.82px;font-size:4.8px;line-height:5.76px;color:#06203a;white-space:nowrap;left:-18.75645161290322px;width:200px;text-align:center;">s&aacute;</span>
<span style="top:322.87px;font-size:4.8px;line-height:5.76px;color:#06203a;white-space:nowrap;left:-18.75645161290322px;width:200px;text-align:center;">6</span>
<span style="top:314.82px;font-size:4.8px;line-height:5.76px;color:#4a1020;white-space:nowrap;left:-8.275806451612908px;width:200px;text-align:center;">do</span>
<span style="top:322.87px;font-size:4.8px;line-height:5.76px;color:#4a1020;white-space:nowrap;left:-8.275806451612908px;width:200px;text-align:center;">7</span>
<span style="top:314.82px;font-size:4.8px;line-height:5.76px;color:#06203a;white-space:nowrap;left:2.204838709677432px;width:200px;text-align:center;">lu</span>
<span style="top:322.87px;font-size:4.8px;line-height:5.76px;color:#06203a;white-space:nowrap;left:2.204838709677432px;width:200px;text-align:center;">8</span>
<span style="top:314.82px;font-size:4.8px;line-height:5.76px;color:#06203a;white-space:nowrap;left:12.685483870967744px;width:200px;text-align:center;">ma</span>
<span style="top:322.87px;font-size:4.8px;line-height:5.76px;color:#06203a;white-space:nowrap;left:12.685483870967744px;width:200px;text-align:center;">9</span>
<span style="top:314.82px;font-size:4.8px;line-height:5.76px;color:#06203a;white-space:nowrap;left:23.166129032258084px;width:200px;text-align:center;">mi</span>
<span style="top:322.87px;font-size:4.8px;line-height:5.76px;color:#06203a;white-space:nowrap;left:23.166129032258084px;width:200px;text-align:center;">10</span>
<span style="top:314.82px;font-size:4.8px;line-height:5.76px;color:#06203a;white-space:nowrap;left:33.646774193548396px;width:200px;text-align:center;">ju</span>
<span style="top:322.87px;font-size:4.8px;line-height:5.76px;color:#06203a;white-space:nowrap;left:33.646774193548396px;width:200px;text-align:center;">11</span>
<span style="top:314.82px;font-size:4.8px;line-height:5.76px;color:#06203a;white-space:nowrap;left:44.127419354838736px;width:200px;text-align:center;">vi</span>
<span style="top:322.87px;font-size:4.8px;line-height:5.76px;color:#06203a;white-space:nowrap;left:44.127419354838736px;width:200px;text-align:center;">12</span>
<span style="top:314.82px;font-size:4.8px;line-height:5.76px;color:#06203a;white-space:nowrap;left:54.60806451612905px;width:200px;text-align:center;">s&aacute;</span>
<span style="top:322.87px;font-size:4.8px;line-height:5.76px;color:#06203a;white-space:nowrap;left:54.60806451612905px;width:200px;text-align:center;">13</span>
<span style="top:314.82px;font-size:4.8px;line-height:5.76px;color:#4a1020;white-space:nowrap;left:65.08870967741939px;width:200px;text-align:center;">do</span>
<span style="top:322.87px;font-size:4.8px;line-height:5.76px;color:#4a1020;white-space:nowrap;left:65.08870967741939px;width:200px;text-align:center;">14</span>
<span style="top:314.82px;font-size:4.8px;line-height:5.76px;color:#06203a;white-space:nowrap;left:75.5693548387097px;width:200px;text-align:center;">lu</span>
<span style="top:322.87px;font-size:4.8px;line-height:5.76px;color:#06203a;white-space:nowrap;left:75.5693548387097px;width:200px;text-align:center;">15</span>
<span style="top:314.82px;font-size:4.8px;line-height:5.76px;color:#06203a;white-space:nowrap;left:86.05000000000004px;width:200px;text-align:center;">ma</span>
<span style="top:322.87px;font-size:4.8px;line-height:5.76px;color:#06203a;white-space:nowrap;left:86.05000000000004px;width:200px;text-align:center;">16</span>
<span style="top:314.82px;font-size:4.8px;line-height:5.76px;color:#06203a;white-space:nowrap;left:96.53064516129035px;width:200px;text-align:center;">mi</span>
<span style="top:322.87px;font-size:4.8px;line-height:5.76px;color:#06203a;white-space:nowrap;left:96.53064516129035px;width:200px;text-align:center;">17</span>
<span style="top:314.82px;font-size:4.8px;line-height:5.76px;color:#06203a;white-space:nowrap;left:107.01129032258066px;width:200px;text-align:center;">ju</span>
<span style="top:322.87px;font-size:4.8px;line-height:5.76px;color:#06203a;white-space:nowrap;left:107.01129032258066px;width:200px;text-align:center;">18</span>
<span style="top:314.82px;font-size:4.8px;line-height:5.76px;color:#06203a;white-space:nowrap;left:117.491935483871px;width:200px;text-align:center;">vi</span>
<span style="top:322.87px;font-size:4.8px;line-height:5.76px;color:#06203a;white-space:nowrap;left:117.491935483871px;width:200px;text-align:center;">19</span>
<span style="top:314.82px;font-size:4.8px;line-height:5.76px;color:#06203a;white-space:nowrap;left:127.97258064516132px;width:200px;text-align:center;">s&aacute;</span>
<span style="top:322.87px;font-size:4.8px;line-height:5.76px;color:#06203a;white-space:nowrap;left:127.97258064516132px;width:200px;text-align:center;">20</span>
<span style="top:314.82px;font-size:4.8px;line-height:5.76px;color:#4a1020;white-space:nowrap;left:138.45322580645166px;width:200px;text-align:center;">do</span>
<span style="top:322.87px;font-size:4.8px;line-height:5.76px;color:#4a1020;white-space:nowrap;left:138.45322580645166px;width:200px;text-align:center;">21</span>
<span style="top:314.82px;font-size:4.8px;line-height:5.76px;color:#06203a;white-space:nowrap;left:148.93387096774197px;width:200px;text-align:center;">lu</span>
<span style="top:322.87px;font-size:4.8px;line-height:5.76px;color:#06203a;white-space:nowrap;left:148.93387096774197px;width:200px;text-align:center;">22</span>
<span style="top:314.82px;font-size:4.8px;line-height:5.76px;color:#06203a;white-space:nowrap;left:159.41451612903228px;width:200px;text-align:center;">ma</span>
<span style="top:322.87px;font-size:4.8px;line-height:5.76px;color:#06203a;white-space:nowrap;left:159.41451612903228px;width:200px;text-align:center;">23</span>
<span style="top:314.82px;font-size:4.8px;line-height:5.76px;color:#06203a;white-space:nowrap;left:169.89516129032262px;width:200px;text-align:center;">mi</span>
<span style="top:322.87px;font-size:4.8px;line-height:5.76px;color:#06203a;white-space:nowrap;left:169.89516129032262px;width:200px;text-align:center;">24</span>
<span style="top:314.82px;font-size:4.8px;line-height:5.76px;color:#06203a;white-space:nowrap;left:180.3758064516129px;width:200px;text-align:center;">ju</span>
<span style="top:322.87px;font-size:4.8px;line-height:5.76px;color:#06203a;white-space:nowrap;left:180.3758064516129px;width:200px;text-align:center;">25</span>
<span style="top:314.82px;font-size:4.8px;line-height:5.76px;color:#06203a;white-space:nowrap;left:190.85645161290324px;width:200px;text-align:center;">vi</span>
<span style="top:322.87px;font-size:4.8px;line-height:5.76px;color:#06203a;white-space:nowrap;left:190.85645161290324px;width:200px;text-align:center;">26</span>
<span style="top:314.82px;font-size:4.8px;line-height:5.76px;color:#06203a;white-space:nowrap;left:201.33709677419358px;width:200px;text-align:center;">s&aacute;</span>
<span style="top:322.87px;font-size:4.8px;line-height:5.76px;color:#06203a;white-space:nowrap;left:201.33709677419358px;width:200px;text-align:center;">27</span>
<span style="top:314.82px;font-size:4.8px;line-height:5.76px;color:#4a1020;white-space:nowrap;left:211.81774193548387px;width:200px;text-align:center;">do</span>
<span style="top:322.87px;font-size:4.8px;line-height:5.76px;color:#4a1020;white-space:nowrap;left:211.81774193548387px;width:200px;text-align:center;">28</span>
<span style="top:314.82px;font-size:4.8px;line-height:5.76px;color:#06203a;white-space:nowrap;left:222.2983870967742px;width:200px;text-align:center;">lu</span>
<span style="top:322.87px;font-size:4.8px;line-height:5.76px;color:#06203a;white-space:nowrap;left:222.2983870967742px;width:200px;text-align:center;">29</span>
<span style="top:314.82px;font-size:4.8px;line-height:5.76px;color:#06203a;white-space:nowrap;left:232.77903225806455px;width:200px;text-align:center;">ma</span>
<span style="top:322.87px;font-size:4.8px;line-height:5.76px;color:#06203a;white-space:nowrap;left:232.77903225806455px;width:200px;text-align:center;">30</span>
<span style="top:314.82px;font-size:4.8px;line-height:5.76px;color:#06203a;white-space:nowrap;left:243.2596774193549px;width:200px;text-align:center;">mi</span>
<span style="top:322.87px;font-size:4.8px;line-height:5.76px;color:#06203a;white-space:nowrap;left:243.2596774193549px;width:200px;text-align:center;">31</span>
<span style="top:331.38px;font-size:4.2px;line-height:5.04px;color:#fff;white-space:nowrap;right:1029.2px;text-align:right;">1</span>
<div style="left:422px;top:140px;width:640px;height:435px;background:#f3efef;"></div>
<div style="left:423px;top:141px;width:639px;height:434px;background:#fff;"></div>
<div style="left:423px;top:141px;width:639px;height:14.8px;background:#217346;"></div>
<span style="left:432px;top:145.18px;font-size:5.2px;line-height:6.24px;color:#fff;white-space:nowrap;transform:scaleX(0.95);transform-origin:0 50%;font-weight:bold;">Autoguardado</span>
<div style="left:469px;top:145px;width:17px;height:7.4px;border:0.8px solid #fff;border-radius:4px;"></div>
<div style="left:471px;top:146.9px;width:3.6px;height:3.6px;background:#fff;border-radius:2px;"></div>
<svg style="left:488px;top:143px" width="60" height="12" viewBox="488 143 60 12"><path d="M491.5 145.5h5.4l1 1v5.4h-6.4z" fill="none" stroke="#fff" stroke-width="0.7"/><path d="M493 145.7v2h3v-2M493 151.8v-2.4h3.4v2.4" fill="none" stroke="#fff" stroke-width="0.6"/><path d="M505 145.6v2.8h2.8 M505.2 148.2q3.2-2.8 5.2-0.2q1.4 2.2-2 4.2" fill="none" stroke="#6fa287" stroke-width="0.8"/><path d="M514.5 148.4l1 1 1-1" fill="none" stroke="#6fa287" stroke-width="0.5"/><path d="M528.6 145.6v2.8h-2.8 M528.4 148.2q-3.2-2.8-5.2-0.2q-1.4 2.2 2 4.2" fill="none" stroke="#6fa287" stroke-width="0.8"/><path d="M531.3 148.4l1 1 1-1" fill="none" stroke="#6fa287" stroke-width="0.5"/><path d="M540 147h3 M540.2 148.8l1.3 1.4 1.3-1.4z" fill="#fff" stroke="#fff" stroke-width="0.5"/></svg>
<span style="left:563px;top:145.06px;font-size:5.4px;line-height:6.48px;color:#fff;white-space:nowrap;transform:scaleX(0.949);transform-origin:0 50%;text-shadow:0 0 0.5px #fff;">Orden Nro 1961 mes 01 2024.XLS &nbsp;-&nbsp; Modo de compatibil...</span>
<svg style="left:702px;top:144px" width="10" height="10" viewBox="0 0 10 10"><circle cx="4.4" cy="4.6" r="3" fill="none" stroke="#fff" stroke-width="0.7"/><circle cx="6.3" cy="6.3" r="1.7" fill="#217346" stroke="#fff" stroke-width="0.6"/><path d="M5.6 6.3l0.5 0.5 0.9-1" stroke="#fff" stroke-width="0.4" fill="none"/></svg>
<span style="left:713.75px;top:145.06px;font-size:5.4px;line-height:6.48px;color:#fff;white-space:nowrap;transform:scaleX(0.934);transform-origin:0 50%;text-shadow:0 0 0.5px #fff;">&bull; Guardado en Este PC</span>
<svg style="left:768.4px;top:147.4px" width="4.4" height="3" viewBox="0 0 4.4 3"><path d="M0.4 0.4l1.8 1.9 1.8-1.9" fill="none" stroke="#fff" stroke-width="0.7"/></svg>
<div style="left:788px;top:143.5px;width:163px;height:10.2px;background:#9fd0b3;"></div>
<svg style="left:795px;top:144.5px" width="8" height="8" viewBox="0 0 8 8"><circle cx="4.6" cy="3.2" r="2" fill="none" stroke="#2b5c41" stroke-width="0.6"/><path d="M3.2 4.6L1 7" stroke="#2b5c41" stroke-width="0.7"/></svg>
<span style="left:810.3px;top:145.18px;font-size:5.2px;line-height:6.24px;color:#2b5c41;white-space:nowrap;transform:scaleX(0.989);transform-origin:0 50%;">Buscar</span>
<svg style="left:1051px;top:144px" width="10" height="11" viewBox="0 0 10 11"><circle cx="3" cy="3" r="1.4" fill="none" stroke="#185a36" stroke-width="0.8"/><path d="M4.4 3h5 M8.6 5.4l-3.6 4.6" stroke="#185a36" stroke-width="0.9"/></svg>
<div style="left:423px;top:156px;width:639px;height:55px;background:#f3f3f3;"></div>
<span style="left:429px;top:159.58px;font-size:5.7px;line-height:6.84px;color:#444;white-space:nowrap;transform:scaleX(1.0);transform-origin:0 50%;">Archivo</span>
<span style="left:461px;top:159.58px;font-size:5.7px;line-height:6.84px;color:#444;white-space:nowrap;transform:scaleX(1.052);transform-origin:0 50%;">Inicio</span>
<span style="left:487.25px;top:159.58px;font-size:5.7px;line-height:6.84px;color:#444;white-space:nowrap;transform:scaleX(0.996);transform-origin:0 50%;">Insertar</span>
<span style="left:519.75px;top:159.58px;font-size:5.7px;line-height:6.84px;color:#444;white-space:nowrap;transform:scaleX(1.031);transform-origin:0 50%;">Disposici&oacute;n de p&aacute;gina</span>
<span style="left:589.75px;top:159.58px;font-size:5.7px;line-height:6.84px;color:#444;white-space:nowrap;transform:scaleX(1.0);transform-origin:0 50%;">F&oacute;rmulas</span>
<span style="left:626.5px;top:159.58px;font-size:5.7px;line-height:6.84px;color:#444;white-space:nowrap;transform:scaleX(0.974);transform-origin:0 50%;">Datos</span>
<span style="left:653.5px;top:159.58px;font-size:5.7px;line-height:6.84px;color:#444;white-space:nowrap;transform:scaleX(0.932);transform-origin:0 50%;">Revisar</span>
<span style="left:684.5px;top:159.58px;font-size:5.7px;line-height:6.84px;color:#444;white-space:nowrap;transform:scaleX(0.994);transform-origin:0 50%;">Vista</span>
<span style="left:710px;top:159.58px;font-size:5.7px;line-height:6.84px;color:#444;white-space:nowrap;transform:scaleX(1.011);transform-origin:0 50%;">Automatizar</span>
<span style="left:754.5px;top:159.58px;font-size:5.7px;line-height:6.84px;color:#444;white-space:nowrap;transform:scaleX(0.996);transform-origin:0 50%;">Ayuda</span>
<div style="left:461px;top:167px;width:14px;height:1.2px;background:#217346;"></div>
<div style="left:496.4px;top:171px;width:1px;height:38px;background:#cbcbcb;"></div>
<div style="left:598.8px;top:171px;width:1px;height:38px;background:#cbcbcb;"></div>
<div style="left:730.3px;top:171px;width:1px;height:38px;background:#cbcbcb;"></div>
<div style="left:799.3px;top:171px;width:1px;height:38px;background:#cbcbcb;"></div>
<div style="left:897.8px;top:171px;width:1px;height:38px;background:#cbcbcb;"></div>
<div style="left:967.3px;top:171px;width:1px;height:38px;background:#cbcbcb;"></div>
<span style="left:441.73px;top:205.0px;font-size:5px;line-height:6.0px;color:#555;white-space:nowrap;transform:scaleX(0.976);transform-origin:0 50%;">Portapapeles</span>
<span style="left:536.75px;top:205.0px;font-size:5px;line-height:6.0px;color:#555;white-space:nowrap;transform:scaleX(0.996);transform-origin:0 50%;">Fuente</span>
<span style="left:649.23px;top:205.0px;font-size:5px;line-height:6.0px;color:#555;white-space:nowrap;transform:scaleX(1.029);transform-origin:0 50%;">Alineaci&oacute;n</span>
<span style="left:752.5px;top:205.0px;font-size:5px;line-height:6.0px;color:#555;white-space:nowrap;transform:scaleX(0.956);transform-origin:0 50%;">N&uacute;mero</span>
<span style="left:841.5px;top:205.0px;font-size:5px;line-height:6.0px;color:#555;white-space:nowrap;transform:scaleX(0.985);transform-origin:0 50%;">Estilos</span>
<span style="left:926.0px;top:205.0px;font-size:5px;line-height:6.0px;color:#555;white-space:nowrap;transform:scaleX(0.932);transform-origin:0 50%;">Celdas</span>
<span style="left:1014.77px;top:205.0px;font-size:5px;line-height:6.0px;color:#555;white-space:nowrap;transform:scaleX(0.991);transform-origin:0 50%;">Edici&oacute;n</span>
<svg style="left:492px;top:205.5px" width="4" height="4" viewBox="0 0 4 4"><path d="M0.4 2.6V0.4H2.6 M1.6 1.6L3.4 3.4 M3.4 2V3.4H2" fill="none" stroke="#5a5a5a" stroke-width="0.6"/></svg>
<svg style="left:595.5px;top:205.5px" width="4" height="4" viewBox="0 0 4 4"><path d="M0.4 2.6V0.4H2.6 M1.6 1.6L3.4 3.4 M3.4 2V3.4H2" fill="none" stroke="#5a5a5a" stroke-width="0.6"/></svg>
<svg style="left:726px;top:205.5px" width="4" height="4" viewBox="0 0 4 4"><path d="M0.4 2.6V0.4H2.6 M1.6 1.6L3.4 3.4 M3.4 2V3.4H2" fill="none" stroke="#5a5a5a" stroke-width="0.6"/></svg>
<svg style="left:795px;top:205.5px" width="4" height="4" viewBox="0 0 4 4"><path d="M0.4 2.6V0.4H2.6 M1.6 1.6L3.4 3.4 M3.4 2V3.4H2" fill="none" stroke="#5a5a5a" stroke-width="0.6"/></svg>
<svg style="left:428px;top:171px" width="68" height="32" viewBox="428 171 68 32"><rect x="431" y="174.6" width="8.6" height="10.6" rx="0.8" fill="#f5f2ea" stroke="#e8a13c" stroke-width="1.2"/><rect x="433" y="173" width="4.6" height="2.6" rx="0.6" fill="#f3f3f3" stroke="#777" stroke-width="0.6"/><rect x="436.6" y="178.4" width="6.6" height="8" fill="#fff" stroke="#666" stroke-width="0.7"/><path d="M438.5 196.2l1.2 1.2 1.2-1.2" fill="none" stroke="#666" stroke-width="0.5" transform="translate(-4 0)"/><path d="M447.5 173.5l2.6 4.6 M451.3 173.5l-2.6 4.6" stroke="#555" stroke-width="0.6"/><circle cx="447.8" cy="179" r="0.9" fill="none" stroke="#3b7fc4" stroke-width="0.6"/><circle cx="451" cy="179" r="0.9" fill="none" stroke="#3b7fc4" stroke-width="0.6"/><rect x="446.6" y="183.2" width="3.6" height="4.8" fill="#fff" stroke="#555" stroke-width="0.6"/><rect x="448.4" y="184.8" width="3.6" height="4.8" fill="#fff" stroke="#555" stroke-width="0.6"/><path d="M474.8 186.4h2.4l-1.2 1.4z" fill="#666"/><path d="M447 199.2l2.6-3 1.8 1.6-2.6 3z" fill="#e8a33d"/><path d="M450.2 195.6l2.2-2.4" stroke="#c0392b" stroke-width="1.1"/><path d="M447 199.4l1.6 1.6" stroke="#555" stroke-width="0.5"/></svg>
<span style="left:428.98px;top:187.88px;font-size:5.2px;line-height:6.24px;color:#444;white-space:nowrap;transform:scaleX(0.955);transform-origin:0 50%;">Pegar</span>
<span style="left:454.75px;top:172.88px;font-size:5.2px;line-height:6.24px;color:#444;white-space:nowrap;transform:scaleX(0.986);transform-origin:0 50%;">Cortar</span>
<span style="left:454.75px;top:183.88px;font-size:5.2px;line-height:6.24px;color:#444;white-space:nowrap;transform:scaleX(1.012);transform-origin:0 50%;">Copiar</span>
<span style="left:454.75px;top:193.88px;font-size:5.2px;line-height:6.24px;color:#444;white-space:nowrap;transform:scaleX(1.039);transform-origin:0 50%;">Copiar formato</span>
<div style="left:500.5px;top:175px;width:54px;height:9.6px;background:#fff;border:0.5px solid #d4d4d4;"></div>
<span style="left:502.25px;top:176.88px;font-size:5.2px;line-height:6.24px;color:#333;white-space:nowrap;transform:scaleX(0.986);transform-origin:0 50%;">Tahoma</span>
<div style="left:555.5px;top:175px;width:19px;height:9.6px;background:#fff;border:0.5px solid #d4d4d4;"></div>
<span style="left:557.25px;top:176.88px;font-size:5.2px;line-height:6.24px;color:#333;white-space:nowrap;transform:scaleX(0.864);transform-origin:0 50%;">10</span>
<svg style="left:498px;top:172px" width="102" height="30" viewBox="498 172 102 30"><path d="M549.9 179.2l1.3 1.5 1.3-1.5z M570.1 179.2l1.3 1.5 1.3-1.5z" fill="#6a6a6a" stroke="none"/><path d="M532.2 193.0l1.3 1.5 1.3-1.5z M553.0 193.0l1.3 1.5 1.3-1.5z M573.0 193.0l1.3 1.5 1.3-1.5z M590.5 193.0l1.3 1.5 1.3-1.5z" fill="#6a6a6a" stroke="none"/><rect x="543.2" y="189.6" width="6.6" height="6.6" fill="none" stroke="#777" stroke-width="0.5"/><path d="M546.5 189.6v6.6M543.2 192.9h6.6" stroke="#777" stroke-width="0.4"/><path d="M567 189.8l2.4 2.4-2.3 2.2-2.3-2.3z" fill="#fff" stroke="#444" stroke-width="0.6"/><path d="M570 192.8q0.8 1.2 0 1.8q-0.8-0.6 0-1.8z" fill="#3b7fc4"/><rect x="563.7" y="195.3" width="7.2" height="1.8" fill="#ffe800"/><rect x="581" y="195.3" width="7" height="1.8" fill="#e8201c"/><path d="M538.8 189v8 M559.4 189v8" stroke="#d0d0d0" stroke-width="0.5"/></svg>
<span style="top:175.16px;font-size:7.4px;line-height:8.88px;color:#444;white-space:nowrap;left:479.9px;width:200px;text-align:center;">A</span>
<span style="top:175.28px;font-size:2.2px;line-height:2.64px;color:#3b7fc4;white-space:nowrap;left:483.6px;width:200px;text-align:center;">&#9650;</span>
<span style="top:176.36px;font-size:6.4px;line-height:7.68px;color:#444;white-space:nowrap;left:491px;width:200px;text-align:center;">A</span>
<span style="top:175.48px;font-size:2.2px;line-height:2.64px;color:#3b7fc4;white-space:nowrap;left:494.20000000000005px;width:200px;text-align:center;">&#9660;</span>
<span style="top:189.96px;font-size:6.4px;line-height:7.68px;color:#222;white-space:nowrap;font-weight:bold;left:405.2px;width:200px;text-align:center;">N</span>
<span style="top:190.08px;font-size:6.2px;line-height:7.44px;color:#444;white-space:nowrap;font-style:italic;left:415.4px;width:200px;text-align:center;">K</span>
<span style="top:190.08px;font-size:6.2px;line-height:7.44px;color:#444;white-space:nowrap;text-decoration:underline;left:426.4px;width:200px;text-align:center;">S</span>
<span style="top:188.68px;font-size:6.2px;line-height:7.44px;color:#444;white-space:nowrap;left:484.4px;width:200px;text-align:center;">A</span>
<div style="left:624px;top:174px;width:10px;height:10.6px;background:#cfcfcf;border:0.5px solid #b5b5b5;"></div>
<svg style="left:600px;top:172px" width="130" height="30" viewBox="600 172 130 30"><path d="M603.7 176.6h7.6 M605.2 178.6h4.6 M605.2 180.5h4.6 " stroke="#707070" stroke-width="0.65" fill="none"/><path d="M616.2 177.29999999999998h4.6 M614.7 179.2h7.6 M616.2 181.1h4.6 " stroke="#707070" stroke-width="0.65" fill="none"/><path d="M626.5 177.89999999999998h4.6 M626.5 179.79999999999998h4.6 M625.0 181.79999999999998h7.6 " stroke="#707070" stroke-width="0.65" fill="none"/><path d="M604.0 190.7h7 M604.0 192.6h4.6 M604.0 194.5h7 M604.0 196.39999999999998h4.6 " stroke="#707070" stroke-width="0.65" fill="none"/><path d="M615.0 190.7h7 M616.2 192.6h4.6 M615.0 194.5h7 M616.2 196.39999999999998h4.6 " stroke="#707070" stroke-width="0.65" fill="none"/><path d="M625.3 190.7h7 M627.6999999999999 192.6h4.6 M625.3 194.5h7 M627.6999999999999 196.39999999999998h4.6 " stroke="#707070" stroke-width="0.65" fill="none"/><path d="M639 181.6l4.6-4.6" stroke="#666" stroke-width="0.6"/><text x="639.6" y="180" font-size="4" fill="#555" font-family="Liberation Sans" transform="rotate(-40 641 179)">ab</text><path d="M642.6 181.4l2.4-0.4-0.8-2" fill="none" stroke="#3b7fc4" stroke-width="0.6"/><path d="M647.7 178.6l1.3 1.5 1.3-1.5z" fill="#6a6a6a" stroke="none"/><path d="M639.3 191.2h6.4 M642.1 192.8h3.6 M642.1 194.4h3.6 M639.3 196h6.4" stroke="#666" stroke-width="0.6"/><path d="M641.3 193.6h-2.2 M640.1 192.6l-1 1 1 1" stroke="#3b7fc4" stroke-width="0.6" fill="none"/><path d="M649.8 191.2h6.4 M652.6 192.8h3.6 M652.6 194.4h3.6 M649.8 196h6.4" stroke="#666" stroke-width="0.6"/><path d="M649.6 193.6h2.2 M650.8 192.6l1 1-1 1" stroke="#3b7fc4" stroke-width="0.6" fill="none"/><path d="M660.8 176v8.5 M660.8 189v8.5" stroke="#d6d6d6" stroke-width="0.5"/><text x="663.4" y="180.6" font-size="3.8" fill="#555" font-family="Liberation Sans">ab</text><path d="M663.6 182.2h4.4q1.8-0.2 1.6-2q-0.2-1.2-1.2-1.2" fill="none" stroke="#3b7fc4" stroke-width="0.6"/><path d="M664.8 181.2l-1.2 1 1.2 1" fill="none" stroke="#3b7fc4" stroke-width="0.5"/><rect x="663.4" y="190.4" width="6.4" height="6.4" fill="#dbe9f7" stroke="#3b7fc4" stroke-width="0.6"/><path d="M664.6 193.6h4 M665.4 192.8l-0.8 0.8 0.8 0.8 M667.8 192.8l0.8 0.8-0.8 0.8" fill="none" stroke="#3b7fc4" stroke-width="0.5"/><path d="M722.1 192.8l1.3 1.5 1.3-1.5z" fill="#6a6a6a" stroke="none"/></svg>
<span style="left:672px;top:177.08px;font-size:5.2px;line-height:6.24px;color:#444;white-space:nowrap;transform:scaleX(1.012);transform-origin:0 50%;">Ajustar texto</span>
<span style="left:672px;top:191.08px;font-size:5.2px;line-height:6.24px;color:#444;white-space:nowrap;transform:scaleX(1.018);transform-origin:0 50%;">Combinar y centrar</span>
<div style="left:734px;top:175px;width:61.5px;height:9.6px;background:#fff;border:0.5px solid #d4d4d4;"></div>
<span style="left:735.75px;top:176.88px;font-size:5.2px;line-height:6.24px;color:#333;white-space:nowrap;transform:scaleX(0.932);transform-origin:0 50%;">General</span>
<svg style="left:732px;top:172px" width="68" height="30" viewBox="732 172 68 30"><path d="M791.1 179.2l1.3 1.5 1.3-1.5z M745.3 193.0l1.3 1.5 1.3-1.5z" fill="#6a6a6a" stroke="none"/><path d="M773.2 189.6v8" stroke="#d6d6d6" stroke-width="0.5"/><path d="M777 192.2h2.4 M778 191.2l-1 1 1 1" stroke="#3b7fc4" stroke-width="0.7" fill="none"/><path d="M788 195.4h2.4 M789.4 194.4l1 1-1 1" stroke="#3b7fc4" stroke-width="0.7" fill="none"/></svg>
<span style="top:189.4px;font-size:8px;line-height:9.6px;color:#4a4a4a;white-space:nowrap;left:638.8px;width:200px;text-align:center;">$</span>
<span style="left:752.9px;top:189.48px;font-size:8.2px;line-height:9.84px;color:#4a4a4a;white-space:nowrap;transform:scaleX(0.905);transform-origin:0 50%;">%</span>
<span style="left:763.3px;top:191.3px;font-size:4.5px;line-height:5.4px;color:#555;white-space:nowrap;transform:scaleX(0.879);transform-origin:0 50%;">000</span>
<span style="top:189.56px;font-size:3.4px;line-height:4.08px;color:#444;white-space:nowrap;left:682.5px;width:200px;text-align:center;">,0</span>
<span style="top:193.56px;font-size:3.4px;line-height:4.08px;color:#444;white-space:nowrap;left:682.5px;width:200px;text-align:center;">,00</span>
<span style="top:189.56px;font-size:3.4px;line-height:4.08px;color:#444;white-space:nowrap;left:693px;width:200px;text-align:center;">,00</span>
<span style="top:193.56px;font-size:3.4px;line-height:4.08px;color:#444;white-space:nowrap;left:693.4px;width:200px;text-align:center;">,0</span>
<svg style="left:800px;top:172px" width="100" height="16" viewBox="800 172 100 16"><rect x="813.5" y="174" width="13.5" height="10" fill="#fff" stroke="#777" stroke-width="0.5"/><path d="M813.5 177.3h13.5M813.5 180.6h13.5M818 174v10M822.5 174v10" stroke="#777" stroke-width="0.4"/><rect x="813.8" y="174.3" width="4" height="2.8" fill="#e8505a"/><rect x="813.8" y="177.6" width="6.5" height="2.8" fill="#3b7fc4"/><rect x="820.3" y="177.6" width="2" height="2.8" fill="#e8505a"/><rect x="813.8" y="180.9" width="6" height="2.8" fill="#e8505a"/><rect x="847" y="174" width="13.5" height="10" fill="#fff" stroke="#777" stroke-width="0.5"/><path d="M847 177.3h13.5M847 180.6h13.5M851.5 174v10M856 174v10" stroke="#777" stroke-width="0.4"/><rect x="851.7" y="177.5" width="6" height="6.3" fill="#6aa6e0"/><path d="M855 183.6l5-5.6 1.4 1.2-5 5.6-1.8 0.4z" fill="#f3f3f3" stroke="#666" stroke-width="0.5"/><rect x="875.5" y="174" width="13.5" height="10" fill="#fff" stroke="#777" stroke-width="0.5"/><rect x="876.2" y="175.8" width="9.6" height="6.4" fill="#6aa6e0"/><path d="M883 183.6l5-5.6 1.4 1.2-5 5.6-1.8 0.4z" fill="#f3f3f3" stroke="#666" stroke-width="0.5"/></svg>
<span style="left:809.75px;top:187.98px;font-size:5.2px;line-height:6.24px;color:#444;white-space:nowrap;transform:scaleX(1.033);transform-origin:0 50%;">Formato</span>
<span style="left:803.75px;top:194.88px;font-size:5.2px;line-height:6.24px;color:#444;white-space:nowrap;transform:scaleX(1.057);transform-origin:0 50%;">condicional</span>
<svg style="left:831.8px;top:197.4px" width="3.2" height="2" viewBox="0 0 3.2 2"><path d="M0 0h3.2l-1.6 2z" fill="#6a6a6a"/></svg>
<span style="left:839.75px;top:187.98px;font-size:5.2px;line-height:6.24px;color:#444;white-space:nowrap;transform:scaleX(1.029);transform-origin:0 50%;">Dar formato</span>
<span style="left:838.5px;top:194.88px;font-size:5.2px;line-height:6.24px;color:#444;white-space:nowrap;transform:scaleX(1.032);transform-origin:0 50%;">como tabla</span>
<svg style="left:865.6999999999999px;top:197.4px" width="3.2" height="2" viewBox="0 0 3.2 2"><path d="M0 0h3.2l-1.6 2z" fill="#6a6a6a"/></svg>
<span style="left:871.75px;top:187.98px;font-size:5.2px;line-height:6.24px;color:#444;white-space:nowrap;transform:scaleX(0.965);transform-origin:0 50%;">Estilos de</span>
<span style="left:874.25px;top:194.88px;font-size:5.2px;line-height:6.24px;color:#444;white-space:nowrap;transform:scaleX(1.046);transform-origin:0 50%;">celda</span>
<svg style="left:888.1999999999999px;top:197.4px" width="3.2" height="2" viewBox="0 0 3.2 2"><path d="M0 0h3.2l-1.6 2z" fill="#6a6a6a"/></svg>
<svg style="left:900px;top:172px" width="66" height="16" viewBox="900 172 66 16"><rect x="905.0" y="175" width="13" height="9" fill="#fff" stroke="#777" stroke-width="0.5"/><path d="M905.0 178h13M905.0 181h13M909.3 175v9M913.7 175v9" stroke="#777" stroke-width="0.4"/><rect x="925.0" y="175" width="13" height="9" fill="#fff" stroke="#777" stroke-width="0.5"/><path d="M925.0 178h13M925.0 181h13M929.3 175v9M933.7 175v9" stroke="#777" stroke-width="0.4"/><rect x="946.5" y="175" width="13" height="9" fill="#fff" stroke="#777" stroke-width="0.5"/><path d="M946.5 178h13M946.5 181h13M950.8 175v9M955.2 175v9" stroke="#777" stroke-width="0.4"/><rect x="905" y="178.2" width="13" height="2.6" fill="#6aa6e0"/><path d="M907 179.5h-3M905.2 178.3l-1.4 1.2 1.4 1.2" stroke="#3b7fc4" stroke-width="0.7" fill="none"/><rect x="925" y="178.2" width="9" height="2.6" fill="#6aa6e0"/><path d="M934.6 177.6l3.6 3.6M938.2 177.6l-3.6 3.6" stroke="#e8505a" stroke-width="0.8"/><rect x="946.8" y="178.2" width="12.4" height="2.6" fill="#6aa6e0"/><rect x="950.9" y="175.2" width="4.2" height="8.6" fill="#6aa6e0" opacity="0.55"/><path d="M949.5 173.2h7" stroke="#3b7fc4" stroke-width="0.7"/></svg>
<span style="left:902.25px;top:187.98px;font-size:5.2px;line-height:6.24px;color:#444;white-space:nowrap;transform:scaleX(1.021);transform-origin:0 50%;">Insertar</span>
<svg style="left:909.9px;top:197.4px" width="3.2" height="2" viewBox="0 0 3.2 2"><path d="M0 0h3.2l-1.6 2z" fill="#6a6a6a"/></svg>
<span style="left:922.25px;top:187.98px;font-size:5.2px;line-height:6.24px;color:#444;white-space:nowrap;transform:scaleX(0.998);transform-origin:0 50%;">Eliminar</span>
<svg style="left:930.1999999999999px;top:197.4px" width="3.2" height="2" viewBox="0 0 3.2 2"><path d="M0 0h3.2l-1.6 2z" fill="#6a6a6a"/></svg>
<span style="left:943.5px;top:187.98px;font-size:5.2px;line-height:6.24px;color:#444;white-space:nowrap;transform:scaleX(1.007);transform-origin:0 50%;">Formato</span>
<svg style="left:951.4px;top:197.4px" width="3.2" height="2" viewBox="0 0 3.2 2"><path d="M0 0h3.2l-1.6 2z" fill="#6a6a6a"/></svg>
<span style="top:170.76px;font-size:8.4px;line-height:10.08px;color:#555;white-space:nowrap;left:875.5px;width:200px;text-align:center;">&Sigma;</span>
<span style="left:981.5px;top:173.08px;font-size:5.2px;line-height:6.24px;color:#444;white-space:nowrap;transform:scaleX(1.014);transform-origin:0 50%;">Autosuma</span>
<svg style="left:1009.4px;top:175.2px" width="3.2" height="2" viewBox="0 0 3.2 2"><path d="M0 0h3.2l-1.6 2z" fill="#6a6a6a"/></svg>
<svg style="left:971px;top:181px" width="10" height="20" viewBox="971 181 10 20"><rect x="972.2" y="182.6" width="6.4" height="6.4" fill="#fff" stroke="#666" stroke-width="0.6"/><path d="M975.4 184v3.4M974 186.2l1.4 1.4 1.4-1.4" stroke="#3b7fc4" stroke-width="0.7" fill="none"/><path d="M972.4 197l3-3.2 2.6 2.4-3 3.2h-1.4z" fill="#f3d9f0" stroke="#b04fb0" stroke-width="0.6"/></svg>
<span style="left:981.5px;top:182.68px;font-size:5.2px;line-height:6.24px;color:#444;white-space:nowrap;transform:scaleX(0.942);transform-origin:0 50%;">Rellenar</span>
<svg style="left:1000.6999999999999px;top:185px" width="3.2" height="2" viewBox="0 0 3.2 2"><path d="M0 0h3.2l-1.6 2z" fill="#6a6a6a"/></svg>
<span style="left:981.5px;top:192.88px;font-size:5.2px;line-height:6.24px;color:#444;white-space:nowrap;transform:scaleX(0.952);transform-origin:0 50%;">Borrar</span>
<svg style="left:996.4px;top:195.2px" width="3.2" height="2" viewBox="0 0 3.2 2"><path d="M0 0h3.2l-1.6 2z" fill="#6a6a6a"/></svg>
<svg style="left:1018px;top:172px" width="44" height="16" viewBox="1018 172 44 16"><text x="1021.6" y="177.8" font-size="6" fill="#3b7fc4" font-family="Liberation Sans">A</text><text x="1021.8" y="184.8" font-size="6" fill="#555" font-family="Liberation Sans">Z</text><path d="M1027.8 176.2h7.4l-2.7 3.1v3.3l-2-0.9v-2.4z" fill="none" stroke="#666" stroke-width="0.7"/><circle cx="1057.5" cy="176.6" r="4.2" fill="none" stroke="#666" stroke-width="0.7"/><path d="M1054.4 179.6l-4 5" stroke="#666" stroke-width="0.9"/></svg>
<span style="left:1016px;top:187.98px;font-size:5.2px;line-height:6.24px;color:#444;white-space:nowrap;transform:scaleX(0.995);transform-origin:0 50%;">Ordenar y</span>
<span style="left:1019.25px;top:194.88px;font-size:5.2px;line-height:6.24px;color:#444;white-space:nowrap;transform:scaleX(1.082);transform-origin:0 50%;">filtrar</span>
<svg style="left:1033.2px;top:197.4px" width="3.2" height="2" viewBox="0 0 3.2 2"><path d="M0 0h3.2l-1.6 2z" fill="#6a6a6a"/></svg>
<span style="left:1047.75px;top:187.98px;font-size:5.2px;line-height:6.24px;color:#444;white-space:nowrap;transform:scaleX(1.162);transform-origin:0 50%;">Buscar y</span>
<span style="left:1041.75px;top:194.88px;font-size:5.2px;line-height:6.24px;color:#444;white-space:nowrap;transform:scaleX(1.084);transform-origin:0 50%;">seleccionar</span>
<div style="left:423px;top:211px;width:639px;height:21px;background:#e6e6e6;"></div>
<div style="left:425.5px;top:217px;width:138px;height:10.6px;background:#fff;"></div>
<span style="left:428.2px;top:219.24px;font-size:5.6px;line-height:6.72px;color:#444;white-space:nowrap;transform:scaleX(0.905);transform-origin:0 50%;">A1</span>
<svg style="left:556px;top:220px" width="4" height="3" viewBox="0 0 4 3"><path d="M0.4 0.4l1.4 1.6 1.4-1.6z" fill="#666"/></svg>
<span style="top:219.0px;font-size:5px;line-height:6.0px;color:#aaa;white-space:nowrap;left:470px;width:200px;text-align:center;">&#8942;</span>
<div style="left:577px;top:217px;width:50px;height:10.6px;background:#fff;"></div>
<svg style="left:577px;top:217px" width="50" height="10" viewBox="577 217 50 10"><path d="M583.4 220l3.6 3.6M587 220l-3.6 3.6" stroke="#b0b0b0" stroke-width="0.6"/><path d="M599 222l1.6 1.8 3-3.8" stroke="#b0b0b0" stroke-width="0.6" fill="none"/></svg>
<span style="top:218.44px;font-size:5.6px;line-height:6.72px;color:#444;white-space:nowrap;font-family:'Liberation Serif',serif;left:517px;width:200px;text-align:center;"><i>f</i><span style="position:static;font-size:3.4px;">x</span></span>
<div style="left:627.5px;top:217px;width:434.5px;height:10.6px;background:#fff;"></div>
<div style="left:423px;top:232px;width:639px;height:343px;background:#fff;"></div>
<div style="left:423px;top:232px;width:639px;height:5.6px;background:#e6e6e6;"></div>
<div style="left:432.6px;top:232px;width:42.2px;height:5.6px;background:#d2d2d2;"></div>
<span style="top:232.66px;font-size:4.9px;line-height:5.88px;color:#333;white-space:nowrap;left:353.70000000000005px;width:200px;text-align:center;">A</span>
<div style="left:474.3px;top:233px;width:1px;height:4.6px;background:#cfcfcf;"></div>
<span style="top:232.66px;font-size:4.9px;line-height:5.88px;color:#333;white-space:nowrap;left:406.65px;width:200px;text-align:center;">B</span>
<div style="left:538.0px;top:233px;width:1px;height:4.6px;background:#cfcfcf;"></div>
<span style="top:232.66px;font-size:4.9px;line-height:5.88px;color:#333;white-space:nowrap;left:468.1px;width:200px;text-align:center;">C</span>
<div style="left:597.2px;top:233px;width:1px;height:4.6px;background:#cfcfcf;"></div>
<span style="top:232.66px;font-size:4.9px;line-height:5.88px;color:#333;white-space:nowrap;left:527.5px;width:200px;text-align:center;">D</span>
<div style="left:656.8px;top:233px;width:1px;height:4.6px;background:#cfcfcf;"></div>
<span style="top:232.66px;font-size:4.9px;line-height:5.88px;color:#333;white-space:nowrap;left:581.4px;width:200px;text-align:center;">E</span>
<div style="left:705.0px;top:233px;width:1px;height:4.6px;background:#cfcfcf;"></div>
<span style="top:232.66px;font-size:4.9px;line-height:5.88px;color:#333;white-space:nowrap;left:620.25px;width:200px;text-align:center;">F</span>
<div style="left:734.5px;top:233px;width:1px;height:4.6px;background:#cfcfcf;"></div>
<span style="top:232.66px;font-size:4.9px;line-height:5.88px;color:#333;white-space:nowrap;left:650.0px;width:200px;text-align:center;">G</span>
<div style="left:764.5px;top:233px;width:1px;height:4.6px;background:#cfcfcf;"></div>
<span style="top:232.66px;font-size:4.9px;line-height:5.88px;color:#333;white-space:nowrap;left:694.5px;width:200px;text-align:center;">H</span>
<div style="left:823.5px;top:233px;width:1px;height:4.6px;background:#cfcfcf;"></div>
<span style="top:232.66px;font-size:4.9px;line-height:5.88px;color:#333;white-space:nowrap;left:745.5px;width:200px;text-align:center;">I</span>
<div style="left:866.5px;top:233px;width:1px;height:4.6px;background:#cfcfcf;"></div>
<span style="top:232.66px;font-size:4.9px;line-height:5.88px;color:#333;white-space:nowrap;left:793.25px;width:200px;text-align:center;">J</span>
<div style="left:919.0px;top:233px;width:1px;height:4.6px;background:#cfcfcf;"></div>
<span style="top:232.66px;font-size:4.9px;line-height:5.88px;color:#333;white-space:nowrap;left:841.0px;width:200px;text-align:center;">K</span>
<div style="left:962.0px;top:233px;width:1px;height:4.6px;background:#cfcfcf;"></div>
<span style="top:232.66px;font-size:4.9px;line-height:5.88px;color:#333;white-space:nowrap;left:883.55px;width:200px;text-align:center;">L</span>
<div style="left:1004.1px;top:233px;width:1px;height:4.6px;background:#cfcfcf;"></div>
<span style="top:232.66px;font-size:4.9px;line-height:5.88px;color:#333;white-space:nowrap;left:924.8px;width:200px;text-align:center;">M</span>
<div style="left:1044.5px;top:233px;width:1px;height:4.6px;background:#cfcfcf;"></div>
<svg style="left:428px;top:233.4px" width="4" height="4" viewBox="0 0 4 4"><path d="M3.6 0.4V3.6H0.4z" fill="#b5b5b5"/></svg>
<div style="left:423px;top:237.6px;width:9.6px;height:337.4px;background:#e6e6e6;"></div>
<div style="left:423px;top:237.6px;width:9.6px;height:7.4px;background:#d2d2d2;"></div>
<span style="left:426.85px;top:239.28px;font-size:5.2px;line-height:6.24px;color:#217346;white-space:nowrap;transform:scaleX(0.934);transform-origin:0 50%;">1</span>
<span style="left:426.85px;top:245.58px;font-size:5.2px;line-height:6.24px;color:#444;white-space:nowrap;transform:scaleX(0.934);transform-origin:0 50%;">2</span>
<span style="left:426.85px;top:254.08px;font-size:5.2px;line-height:6.24px;color:#444;white-space:nowrap;transform:scaleX(0.934);transform-origin:0 50%;">3</span>
<span style="left:426.85px;top:262.78px;font-size:5.2px;line-height:6.24px;color:#444;white-space:nowrap;transform:scaleX(0.934);transform-origin:0 50%;">4</span>
<span style="left:426.85px;top:269.08px;font-size:5.2px;line-height:6.24px;color:#444;white-space:nowrap;transform:scaleX(0.934);transform-origin:0 50%;">5</span>
<span style="left:426.85px;top:275.28px;font-size:5.2px;line-height:6.24px;color:#444;white-space:nowrap;transform:scaleX(0.934);transform-origin:0 50%;">6</span>
<span style="left:426.85px;top:286.28px;font-size:5.2px;line-height:6.24px;color:#444;white-space:nowrap;transform:scaleX(0.934);transform-origin:0 50%;">7</span>
<span style="left:426.85px;top:292.78px;font-size:5.2px;line-height:6.24px;color:#444;white-space:nowrap;transform:scaleX(0.934);transform-origin:0 50%;">8</span>
<span style="left:426.85px;top:299.58px;font-size:5.2px;line-height:6.24px;color:#444;white-space:nowrap;transform:scaleX(0.934);transform-origin:0 50%;">9</span>
<span style="left:425.7px;top:306.28px;font-size:5.2px;line-height:6.24px;color:#444;white-space:nowrap;transform:scaleX(0.864);transform-origin:0 50%;">10</span>
<span style="left:425.7px;top:312.88px;font-size:5.2px;line-height:6.24px;color:#444;white-space:nowrap;transform:scaleX(0.926);transform-origin:0 50%;">11</span>
<span style="left:425.7px;top:319.78px;font-size:5.2px;line-height:6.24px;color:#444;white-space:nowrap;transform:scaleX(0.864);transform-origin:0 50%;">12</span>
<span style="left:425.7px;top:326.48px;font-size:5.2px;line-height:6.24px;color:#444;white-space:nowrap;transform:scaleX(0.864);transform-origin:0 50%;">13</span>
<span style="left:425.7px;top:333.08px;font-size:5.2px;line-height:6.24px;color:#444;white-space:nowrap;transform:scaleX(0.864);transform-origin:0 50%;">14</span>
<span style="left:425.7px;top:339.58px;font-size:5.2px;line-height:6.24px;color:#444;white-space:nowrap;transform:scaleX(0.864);transform-origin:0 50%;">15</span>
<span style="left:425.7px;top:346.08px;font-size:5.2px;line-height:6.24px;color:#444;white-space:nowrap;transform:scaleX(0.864);transform-origin:0 50%;">16</span>
<span style="left:425.7px;top:352.48px;font-size:5.2px;line-height:6.24px;color:#444;white-space:nowrap;transform:scaleX(0.864);transform-origin:0 50%;">17</span>
<span style="left:425.7px;top:358.68px;font-size:5.2px;line-height:6.24px;color:#444;white-space:nowrap;transform:scaleX(0.864);transform-origin:0 50%;">18</span>
<span style="left:425.7px;top:364.78px;font-size:5.2px;line-height:6.24px;color:#444;white-space:nowrap;transform:scaleX(0.864);transform-origin:0 50%;">19</span>
<span style="left:425.6px;top:395.33px;font-size:5.2px;line-height:6.24px;color:#444;white-space:nowrap;transform:scaleX(0.899);transform-origin:0 50%;">20</span>
<span style="left:425.6px;top:426.08px;font-size:5.2px;line-height:6.24px;color:#444;white-space:nowrap;transform:scaleX(0.899);transform-origin:0 50%;">21</span>
<span style="left:425.6px;top:456.83px;font-size:5.2px;line-height:6.24px;color:#444;white-space:nowrap;transform:scaleX(0.899);transform-origin:0 50%;">22</span>
<span style="left:425.6px;top:487.58px;font-size:5.2px;line-height:6.24px;color:#444;white-space:nowrap;transform:scaleX(0.899);transform-origin:0 50%;">23</span>
<span style="left:425.6px;top:518.33px;font-size:5.2px;line-height:6.24px;color:#444;white-space:nowrap;transform:scaleX(0.899);transform-origin:0 50%;">24</span>
<span style="left:425.6px;top:549.08px;font-size:5.2px;line-height:6.24px;color:#444;white-space:nowrap;transform:scaleX(0.899);transform-origin:0 50%;">25</span>
<span style="left:425.6px;top:579.83px;font-size:5.2px;line-height:6.24px;color:#444;white-space:nowrap;transform:scaleX(0.899);transform-origin:0 50%;">26</span>
<div style="left:432.6px;top:237.6px;width:612.4px;height:5.2px;background:#d8d8d8;"></div>
<div style="left:432px;top:237px;width:43.2px;height:8px;background:#dcdcdc;border:1px solid #38875b;"></div>
<div style="left:474px;top:244px;width:2px;height:2px;background:#217346;"></div>
<div style="left:432.6px;top:251.3px;width:42.19999999999999px;height:8.5px;background:#0470c1;"></div>
<span style="left:434.2px;top:253.05px;font-size:5.5px;line-height:6.6px;color:#fff;white-space:nowrap;transform:scaleX(0.917);transform-origin:0 50%;font-weight:bold;">AGENCIA</span>
<div style="left:432.6px;top:259.8px;width:42.19999999999999px;height:8.699999999999989px;background:#0470c1;"></div>
<span style="left:434.2px;top:261.65px;font-size:5.5px;line-height:6.6px;color:#fff;white-space:nowrap;transform:scaleX(0.95);transform-origin:0 50%;font-weight:bold;">R.F.C.:</span>
<div style="left:432.6px;top:268.5px;width:42.19999999999999px;height:6.300000000000011px;background:#0470c1;"></div>
<span style="left:434.2px;top:269.15px;font-size:5.5px;line-height:6.6px;color:#fff;white-space:nowrap;transform:scaleX(0.885);transform-origin:0 50%;font-weight:bold;">TELEFONO</span>
<div style="left:432.6px;top:274.8px;width:42.19999999999999px;height:6.199999999999989px;background:#0470c1;"></div>
<span style="left:434.2px;top:275.4px;font-size:5.5px;line-height:6.6px;color:#fff;white-space:nowrap;transform:scaleX(0.875);transform-origin:0 50%;font-weight:bold;">DIRECCION</span>
<span style="left:476.25px;top:253.1px;font-size:5.5px;line-height:6.6px;color:#000;white-space:nowrap;transform:scaleX(0.911);transform-origin:0 50%;font-weight:bold;">Agencia</span>
<svg style="left:423px;top:232px" width="639" height="343" viewBox="423 232 639 343"><path d="M432.6 251.3H597.7V281H432.6" fill="none" stroke="#1a1a1a" stroke-width="1.3"/><path d="M432.60 251.30V281.00" fill="none" stroke="#1a1a1a" stroke-width="0.6"/><path d="M432.60 259.80H597.70M432.60 268.50H597.70M432.60 274.80H597.70" fill="none" stroke="#1a1a1a" stroke-width="1"/><path d="M474.80 251.30V281.00" fill="none" stroke="#1a1a1a" stroke-width="0.8"/></svg>
<svg style="left:476px;top:261px" width="48.6" height="14.4" viewBox="0 0 48.6 14.4" shape-rendering="crispEdges"><rect x="0.0" y="0.0" width="5.5" height="7.2" fill="#e6e6e6"/><rect x="5.4" y="0.0" width="5.5" height="7.2" fill="#e1e1e1"/><rect x="10.8" y="0.0" width="5.5" height="7.2" fill="#dbdbdb"/><rect x="16.2" y="0.0" width="5.5" height="7.2" fill="#dbdbdb"/><rect x="21.6" y="0.0" width="5.5" height="7.2" fill="#d6d6d6"/><rect x="27.0" y="0.0" width="5.5" height="7.2" fill="#d2d2d2"/><rect x="32.4" y="0.0" width="5.5" height="7.2" fill="#d1d1d1"/><rect x="37.8" y="0.0" width="5.5" height="7.2" fill="#d6d6d6"/><rect x="43.2" y="0.0" width="5.5" height="7.2" fill="#ececec"/><rect x="0.0" y="7.2" width="5.5" height="7.2" fill="#e0e0e0"/><rect x="5.4" y="7.2" width="5.5" height="7.2" fill="#d8d8d8"/><rect x="10.8" y="7.2" width="5.5" height="7.2" fill="#cccccc"/><rect x="16.2" y="7.2" width="5.5" height="7.2" fill="#cbcbcb"/><rect x="21.6" y="7.2" width="5.5" height="7.2" fill="#c4c4c4"/><rect x="27.0" y="7.2" width="5.5" height="7.2" fill="#c5c5c5"/><rect x="32.4" y="7.2" width="5.5" height="7.2" fill="#c7c7c7"/><rect x="37.8" y="7.2" width="5.5" height="7.2" fill="#d6d6d6"/><rect x="43.2" y="7.2" width="5.5" height="7.2" fill="#ebebeb"/></svg>
<span style="left:476.5px;top:276.02px;font-size:3.8px;line-height:4.56px;color:#777;white-space:nowrap;transform:scaleX(0.947);transform-origin:0 50%;">Lago Zurich</span>
<span style="left:599.5px;top:253.0px;font-size:5.5px;line-height:6.6px;color:#000;white-space:nowrap;transform:scaleX(0.864);transform-origin:0 50%;font-weight:bold;">REGION</span>
<span style="left:599.5px;top:261.7px;font-size:5.5px;line-height:6.6px;color:#000;white-space:nowrap;transform:scaleX(0.897);transform-origin:0 50%;font-weight:bold;">CONTRATO</span>
<span style="left:599.5px;top:268.3px;font-size:5.5px;line-height:6.6px;color:#000;white-space:nowrap;transform:scaleX(0.893);transform-origin:0 50%;font-weight:bold;">TIPO DE FACTURACI&Oacute;N</span>
<span style="left:659.25px;top:253.5px;font-size:5px;line-height:6.0px;color:#2a2a2a;white-space:nowrap;transform:scaleX(0.764);transform-origin:0 50%;">REGION 9</span>
<span style="left:659.25px;top:262.2px;font-size:5px;line-height:6.0px;color:#2a2a2a;white-space:nowrap;transform:scaleX(0.924);transform-origin:0 50%;">2582-2024_FDRC_LOC_DF_R9</span>
<span style="left:659.25px;top:268.8px;font-size:5px;line-height:6.0px;color:#2a2a2a;white-space:nowrap;transform:scaleX(0.811);transform-origin:0 50%;">DIRECTA</span>
<div style="left:656.6px;top:266.4px;width:27.6px;height:8.8px;border:1.3px solid #22e822;border-radius:1px;"></div>
<div style="left:705.5px;top:261px;width:59.5px;height:0.5px;background:#e0e0e0;"></div>
<div style="left:705.5px;top:268.5px;width:59.5px;height:0.5px;background:#e0e0e0;"></div>
<div style="left:735px;top:261px;width:0.5px;height:14px;background:#e0e0e0;"></div>
<span style="left:765.8px;top:253.78px;font-size:4.7px;line-height:5.64px;color:#000;white-space:nowrap;transform:scaleX(1.025);transform-origin:0 50%;font-weight:bold;">NUMERO PED CLIENTE</span>
<span style="left:765.8px;top:262.58px;font-size:4.7px;line-height:5.64px;color:#000;white-space:nowrap;transform:scaleX(1.028);transform-origin:0 50%;font-weight:bold;">DIVISI&Oacute;N</span>
<span style="left:765.8px;top:269.38px;font-size:4.7px;line-height:5.64px;color:#000;white-space:nowrap;transform:scaleX(1.04);transform-origin:0 50%;font-weight:bold;">CONDICI&Oacute;N DE PAGO</span>
<span style="left:825.5px;top:253.6px;font-size:5px;line-height:6.0px;color:#2a2a2a;white-space:nowrap;transform:scaleX(0.933);transform-origin:0 50%;">PSPOPT027</span>
<span style="left:825.5px;top:269.8px;font-size:5px;line-height:6.0px;color:#2a2a2a;white-space:nowrap;transform:scaleX(0.897);transform-origin:0 50%;">CONTADO</span>
<span style="left:878px;top:251.44px;font-size:7.6px;line-height:9.12px;color:#000;white-space:nowrap;transform:scaleX(0.945);transform-origin:0 50%;font-weight:bold;">NUMERO DE ORDEN:</span>
<span style="left:982.8px;top:251.32px;font-size:7.8px;line-height:9.36px;color:#000;white-space:nowrap;transform:scaleX(1.05);transform-origin:0 50%;font-weight:bold;">11961/2024</span>
<span style="left:1006.25px;top:268.92px;font-size:4.8px;line-height:5.76px;color:#222;white-space:nowrap;transform:scaleX(0.912);transform-origin:0 50%;">P&aacute;gina: 1</span>
<span style="left:1006.25px;top:275.12px;font-size:4.8px;line-height:5.76px;color:#222;white-space:nowrap;transform:scaleX(0.922);transform-origin:0 50%;">Fecha: 15/10/2024</span>
<span style="left:1006.25px;top:286.12px;font-size:4.8px;line-height:5.76px;color:#222;white-space:nowrap;transform:scaleX(0.913);transform-origin:0 50%;">Hora: 15:21:48</span>
<div style="left:432.6px;top:298.5px;width:42.19999999999999px;height:6.800000000000011px;background:#0470c1;"></div>
<span style="left:434.2px;top:299.4px;font-size:5.5px;line-height:6.6px;color:#fff;white-space:nowrap;transform:scaleX(0.893);transform-origin:0 50%;font-weight:bold;">DIRIGIDO A:</span>
<div style="left:432.6px;top:305.3px;width:42.19999999999999px;height:6.699999999999989px;background:#0470c1;"></div>
<span style="left:434.2px;top:306.15px;font-size:5.5px;line-height:6.6px;color:#fff;white-space:nowrap;transform:scaleX(0.875);transform-origin:0 50%;font-weight:bold;">DIRECCION</span>
<div style="left:432.6px;top:312px;width:42.19999999999999px;height:6.600000000000023px;background:#0470c1;"></div>
<span style="left:434.2px;top:312.8px;font-size:5.5px;line-height:6.6px;color:#fff;white-space:nowrap;transform:scaleX(0.95);transform-origin:0 50%;font-weight:bold;">R.F.C.:</span>
<div style="left:432.6px;top:318.6px;width:42.19999999999999px;height:6.899999999999977px;background:#0470c1;"></div>
<span style="left:434.2px;top:319.55px;font-size:5.5px;line-height:6.6px;color:#fff;white-space:nowrap;transform:scaleX(0.885);transform-origin:0 50%;font-weight:bold;">TELEFONO</span>
<svg style="left:423px;top:232px" width="639" height="343" viewBox="423 232 639 343"><path d="M867.00 251.30H962.50V259.80H867.00ZM962.50 251.30H1045.00V259.80H962.50ZM962.50 259.80H1045.00V268.70H962.50ZM432.60 292.20H1045.00" fill="none" stroke="#1a1a1a" stroke-width="1.2"/><path d="M432.6 298.5H597.7V325.5H432.6" fill="none" stroke="#1a1a1a" stroke-width="1.3"/><path d="M432.60 298.50V325.50" fill="none" stroke="#1a1a1a" stroke-width="0.6"/><path d="M432.60 305.30H597.70M432.60 312.00H597.70M432.60 318.60H597.70" fill="none" stroke="#1a1a1a" stroke-width="1"/><path d="M474.80 298.50V325.50" fill="none" stroke="#1a1a1a" stroke-width="0.8"/></svg>
<svg style="left:476px;top:299.2px" width="45.6" height="26.2" viewBox="0 0 45.6 26.2" shape-rendering="crispEdges"><rect x="0.0" y="0.0" width="5.8" height="6.6" fill="#d2d2d2"/><rect x="5.7" y="0.0" width="5.8" height="6.6" fill="#b3b3b3"/><rect x="11.4" y="0.0" width="5.8" height="6.6" fill="#ababab"/><rect x="17.1" y="0.0" width="5.8" height="6.6" fill="#b7b7b7"/><rect x="22.8" y="0.0" width="5.8" height="6.6" fill="#c0c0c0"/><rect x="28.5" y="0.0" width="5.8" height="6.6" fill="#a6a6a6"/><rect x="34.2" y="0.0" width="5.8" height="6.6" fill="#b1b1b1"/><rect x="39.9" y="0.0" width="5.8" height="6.6" fill="#dfdfdf"/><rect x="0.0" y="6.5" width="5.8" height="6.6" fill="#c4c4c4"/><rect x="5.7" y="6.5" width="5.8" height="6.6" fill="#b4b4b4"/><rect x="11.4" y="6.5" width="5.8" height="6.6" fill="#afafaf"/><rect x="17.1" y="6.5" width="5.8" height="6.6" fill="#a5a5a5"/><rect x="22.8" y="6.5" width="5.8" height="6.6" fill="#b9b9b9"/><rect x="28.5" y="6.5" width="5.8" height="6.6" fill="#b6b6b6"/><rect x="34.2" y="6.5" width="5.8" height="6.6" fill="#bfbfbf"/><rect x="39.9" y="6.5" width="5.8" height="6.6" fill="#d5d5d5"/><rect x="0.0" y="13.1" width="5.8" height="6.6" fill="#cccccc"/><rect x="5.7" y="13.1" width="5.8" height="6.6" fill="#b6b6b6"/><rect x="11.4" y="13.1" width="5.8" height="6.6" fill="#ababab"/><rect x="17.1" y="13.1" width="5.8" height="6.6" fill="#a3a3a3"/><rect x="22.8" y="13.1" width="5.8" height="6.6" fill="#a3a3a3"/><rect x="28.5" y="13.1" width="5.8" height="6.6" fill="#b6b6b6"/><rect x="34.2" y="13.1" width="5.8" height="6.6" fill="#c2c2c2"/><rect x="39.9" y="13.1" width="5.8" height="6.6" fill="#d4d4d4"/><rect x="0.0" y="19.6" width="5.8" height="6.6" fill="#dedede"/><rect x="5.7" y="19.6" width="5.8" height="6.6" fill="#cecece"/><rect x="11.4" y="19.6" width="5.8" height="6.6" fill="#c4c4c4"/><rect x="17.1" y="19.6" width="5.8" height="6.6" fill="#cdcdcd"/><rect x="22.8" y="19.6" width="5.8" height="6.6" fill="#cecece"/><rect x="28.5" y="19.6" width="5.8" height="6.6" fill="#d3d3d3"/><rect x="34.2" y="19.6" width="5.8" height="6.6" fill="#efefef"/></svg>
<div style="left:657.3px;top:298.5px;width:48.200000000000045px;height:6.800000000000011px;background:#0470c1;"></div>
<span style="left:658.9px;top:299.4px;font-size:5.5px;line-height:6.6px;color:#fff;white-space:nowrap;transform:scaleX(0.883);transform-origin:0 50%;font-weight:bold;">PERIODO</span>
<div style="left:657.3px;top:305.3px;width:48.200000000000045px;height:6.699999999999989px;background:#0470c1;"></div>
<span style="left:658.9px;top:306.15px;font-size:5.5px;line-height:6.6px;color:#fff;white-space:nowrap;transform:scaleX(0.884);transform-origin:0 50%;font-weight:bold;">JOBNOMBER</span>
<div style="left:657.3px;top:312px;width:48.200000000000045px;height:6.600000000000023px;background:#0470c1;"></div>
<span style="left:658.9px;top:312.8px;font-size:5.5px;line-height:6.6px;color:#fff;white-space:nowrap;transform:scaleX(0.867);transform-origin:0 50%;font-weight:bold;">CAMPA&Ntilde;A:</span>
<div style="left:657.3px;top:318.6px;width:48.200000000000045px;height:6.899999999999977px;background:#0470c1;"></div>
<span style="left:658.9px;top:319.55px;font-size:5.5px;line-height:6.6px;color:#fff;white-space:nowrap;transform:scaleX(0.912);transform-origin:0 50%;font-weight:bold;">PRODUCTO</span>
<div style="left:657.3px;top:325.5px;width:48.200000000000045px;height:6.699999999999989px;background:#0470c1;"></div>
<span style="left:658.9px;top:326.35px;font-size:5.5px;line-height:6.6px;color:#fff;white-space:nowrap;transform:scaleX(0.869);transform-origin:0 50%;font-weight:bold;">TIPO DE MEDIO</span>
<svg style="left:423px;top:232px" width="639" height="343" viewBox="423 232 639 343"><path d="M657.30 298.50H824.00V332.20H657.30Z" fill="none" stroke="#1a1a1a" stroke-width="1.3"/><path d="M657.30 305.30H824.00M657.30 312.00H824.00M657.30 318.60H824.00M657.30 325.50H824.00" fill="none" stroke="#1a1a1a" stroke-width="1"/><path d="M705.50 298.50V332.20" fill="none" stroke="#1a1a1a" stroke-width="0.8"/></svg>
<svg style="left:706.3px;top:299px" width="58.6" height="33" viewBox="0 0 58.6 33" shape-rendering="crispEdges"><rect x="0.0" y="0.0" width="5.4" height="6.6" fill="#dbdbdb"/><rect x="5.3" y="0.0" width="5.4" height="6.6" fill="#dbdbdb"/><rect x="10.7" y="0.0" width="5.4" height="6.6" fill="#d9d9d9"/><rect x="16.0" y="0.0" width="5.4" height="6.6" fill="#c3c3c3"/><rect x="0.0" y="6.6" width="5.4" height="6.6" fill="#acacac"/><rect x="5.3" y="6.6" width="5.4" height="6.6" fill="#969696"/><rect x="10.7" y="6.6" width="5.4" height="6.6" fill="#8f8f8f"/><rect x="16.0" y="6.6" width="5.4" height="6.6" fill="#bbbbbb"/><rect x="21.3" y="6.6" width="5.4" height="6.6" fill="#959595"/><rect x="26.6" y="6.6" width="5.4" height="6.6" fill="#969696"/><rect x="32.0" y="6.6" width="5.4" height="6.6" fill="#969696"/><rect x="37.3" y="6.6" width="5.4" height="6.6" fill="#9d9d9d"/><rect x="42.6" y="6.6" width="5.4" height="6.6" fill="#cacaca"/><rect x="47.9" y="6.6" width="5.4" height="6.6" fill="#d5d5d5"/><rect x="53.3" y="6.6" width="5.4" height="6.6" fill="#dcdcdc"/><rect x="0.0" y="13.2" width="5.4" height="6.6" fill="#bcbcbc"/><rect x="5.3" y="13.2" width="5.4" height="6.6" fill="#bababa"/><rect x="10.7" y="13.2" width="5.4" height="6.6" fill="#b1b1b1"/><rect x="16.0" y="13.2" width="5.4" height="6.6" fill="#bfbfbf"/><rect x="21.3" y="13.2" width="5.4" height="6.6" fill="#bbbbbb"/><rect x="26.6" y="13.2" width="5.4" height="6.6" fill="#d2d2d2"/><rect x="32.0" y="13.2" width="5.4" height="6.6" fill="#c5c5c5"/><rect x="37.3" y="13.2" width="5.4" height="6.6" fill="#b9b9b9"/><rect x="42.6" y="13.2" width="5.4" height="6.6" fill="#c0c0c0"/><rect x="47.9" y="13.2" width="5.4" height="6.6" fill="#c2c2c2"/><rect x="53.3" y="13.2" width="5.4" height="6.6" fill="#c9c9c9"/><rect x="0.0" y="19.8" width="5.4" height="6.6" fill="#b5b5b5"/><rect x="5.3" y="19.8" width="5.4" height="6.6" fill="#b1b1b1"/><rect x="10.7" y="19.8" width="5.4" height="6.6" fill="#9e9e9e"/><rect x="16.0" y="19.8" width="5.4" height="6.6" fill="#a0a0a0"/><rect x="21.3" y="19.8" width="5.4" height="6.6" fill="#bababa"/><rect x="26.6" y="19.8" width="5.4" height="6.6" fill="#a7a7a7"/><rect x="32.0" y="19.8" width="5.4" height="6.6" fill="#adadad"/><rect x="37.3" y="19.8" width="5.4" height="6.6" fill="#b1b1b1"/><rect x="42.6" y="19.8" width="5.4" height="6.6" fill="#aaaaaa"/><rect x="47.9" y="19.8" width="5.4" height="6.6" fill="#b3b3b3"/><rect x="53.3" y="19.8" width="5.4" height="6.6" fill="#cecece"/><rect x="0.0" y="26.4" width="5.4" height="6.6" fill="#cacaca"/><rect x="5.3" y="26.4" width="5.4" height="6.6" fill="#bebebe"/><rect x="10.7" y="26.4" width="5.4" height="6.6" fill="#b7b7b7"/><rect x="16.0" y="26.4" width="5.4" height="6.6" fill="#a2a2a2"/><rect x="21.3" y="26.4" width="5.4" height="6.6" fill="#a0a0a0"/><rect x="26.6" y="26.4" width="5.4" height="6.6" fill="#c3c3c3"/><rect x="32.0" y="26.4" width="5.4" height="6.6" fill="#e4e4e4"/></svg>
<div style="left:867px;top:298.5px;width:52.5px;height:6.800000000000011px;background:#0470c1;"></div>
<span style="left:868.6px;top:299.4px;font-size:5.5px;line-height:6.6px;color:#fff;white-space:nowrap;transform:scaleX(0.872);transform-origin:0 50%;font-weight:bold;">PLAN N&ordm;:</span>
<div style="left:867px;top:305.3px;width:52.5px;height:6.699999999999989px;background:#0470c1;"></div>
<span style="left:868.6px;top:306.15px;font-size:5.5px;line-height:6.6px;color:#fff;white-space:nowrap;transform:scaleX(0.837);transform-origin:0 50%;font-weight:bold;">CLIENTE</span>
<div style="left:867px;top:312px;width:52.5px;height:6.600000000000023px;background:#0470c1;"></div>
<span style="left:868.6px;top:312.8px;font-size:5.5px;line-height:6.6px;color:#fff;white-space:nowrap;transform:scaleX(0.889);transform-origin:0 50%;font-weight:bold;">DOMICILIO</span>
<div style="left:867px;top:318.6px;width:52.5px;height:6.899999999999977px;background:#0470c1;"></div>
<span style="left:868.6px;top:319.55px;font-size:5.5px;line-height:6.6px;color:#fff;white-space:nowrap;transform:scaleX(0.795);transform-origin:0 50%;font-weight:bold;">R.F.C.:</span>
<div style="left:867px;top:325.5px;width:52.5px;height:6.699999999999989px;background:#0470c1;"></div>
<span style="left:868.6px;top:326.35px;font-size:5.5px;line-height:6.6px;color:#fff;white-space:nowrap;transform:scaleX(0.867);transform-origin:0 50%;font-weight:bold;">MONEDA</span>
<div style="left:867px;top:332.2px;width:52.5px;height:6.600000000000023px;background:#0470c1;"></div>
<span style="left:868.6px;top:333.0px;font-size:5.5px;line-height:6.6px;color:#fff;white-space:nowrap;transform:scaleX(0.885);transform-origin:0 50%;font-weight:bold;">COTIZACION</span>
<div style="left:962.5px;top:298.5px;width:42.10000000000002px;height:6.800000000000011px;background:#0470c1;"></div>
<span style="left:964px;top:299.1px;font-size:5.5px;line-height:6.6px;color:#fff;white-space:nowrap;transform:scaleX(0.904);transform-origin:0 50%;font-weight:bold;">PRESUPUESTO</span>
<span style="left:921.25px;top:299.56px;font-size:4.9px;line-height:5.88px;color:#222;white-space:nowrap;transform:scaleX(0.89);transform-origin:0 50%;">00019796</span>
<span style="left:1005.6px;top:299.56px;font-size:4.9px;line-height:5.88px;color:#222;white-space:nowrap;transform:scaleX(0.965);transform-origin:0 50%;">0000000090</span>
<svg style="left:423px;top:232px" width="639" height="343" viewBox="423 232 639 343"><path d="M867.00 298.50H1045.00V338.80H867.00Z" fill="none" stroke="#1a1a1a" stroke-width="1.3"/><path d="M867.00 305.30H1045.00M867.00 312.00H1045.00M867.00 318.60H1045.00M867.00 325.50H1045.00M867.00 332.20H1045.00" fill="none" stroke="#1a1a1a" stroke-width="1"/><path d="M919.50 298.50V338.80M962.50 298.50V305.30M1004.60 298.50V305.30" fill="none" stroke="#1a1a1a" stroke-width="0.8"/></svg>
<svg style="left:920.3px;top:305.8px" width="68.7" height="27.8" viewBox="0 0 68.7 27.8" shape-rendering="crispEdges"><rect x="0.0" y="0.0" width="5.8" height="7.0" fill="#b0b0b0"/><rect x="5.7" y="0.0" width="5.8" height="7.0" fill="#b1b1b1"/><rect x="11.5" y="0.0" width="5.8" height="7.0" fill="#ababab"/><rect x="17.2" y="0.0" width="5.8" height="7.0" fill="#b7b7b7"/><rect x="22.9" y="0.0" width="5.8" height="7.0" fill="#ababab"/><rect x="28.6" y="0.0" width="5.8" height="7.0" fill="#b3b3b3"/><rect x="34.4" y="0.0" width="5.8" height="7.0" fill="#acacac"/><rect x="40.1" y="0.0" width="5.8" height="7.0" fill="#a5a5a5"/><rect x="45.8" y="0.0" width="5.8" height="7.0" fill="#b0b0b0"/><rect x="51.5" y="0.0" width="5.8" height="7.0" fill="#b2b2b2"/><rect x="57.3" y="0.0" width="5.8" height="7.0" fill="#bdbdbd"/><rect x="63.0" y="0.0" width="5.8" height="7.0" fill="#cfcfcf"/><rect x="0.0" y="7.0" width="5.8" height="7.0" fill="#b6b6b6"/><rect x="5.7" y="7.0" width="5.8" height="7.0" fill="#ababab"/><rect x="11.5" y="7.0" width="5.8" height="7.0" fill="#aeaeae"/><rect x="17.2" y="7.0" width="5.8" height="7.0" fill="#b5b5b5"/><rect x="22.9" y="7.0" width="5.8" height="7.0" fill="#b7b7b7"/><rect x="28.6" y="7.0" width="5.8" height="7.0" fill="#b3b3b3"/><rect x="34.4" y="7.0" width="5.8" height="7.0" fill="#b9b9b9"/><rect x="40.1" y="7.0" width="5.8" height="7.0" fill="#b4b4b4"/><rect x="45.8" y="7.0" width="5.8" height="7.0" fill="#adadad"/><rect x="51.5" y="7.0" width="5.8" height="7.0" fill="#b3b3b3"/><rect x="57.3" y="7.0" width="5.8" height="7.0" fill="#d0d0d0"/><rect x="63.0" y="7.0" width="5.8" height="7.0" fill="#e3e3e3"/><rect x="0.0" y="13.9" width="5.8" height="7.0" fill="#c0c0c0"/><rect x="5.7" y="13.9" width="5.8" height="7.0" fill="#b7b7b7"/><rect x="11.5" y="13.9" width="5.8" height="7.0" fill="#b8b8b8"/><rect x="17.2" y="13.9" width="5.8" height="7.0" fill="#bfbfbf"/><rect x="22.9" y="13.9" width="5.8" height="7.0" fill="#cccccc"/><rect x="28.6" y="13.9" width="5.8" height="7.0" fill="#e3e3e3"/><rect x="34.4" y="13.9" width="5.8" height="7.0" fill="#eaeaea"/><rect x="40.1" y="13.9" width="5.8" height="7.0" fill="#e4e4e4"/><rect x="45.8" y="13.9" width="5.8" height="7.0" fill="#e2e2e2"/><rect x="51.5" y="13.9" width="5.8" height="7.0" fill="#e0e0e0"/><rect x="57.3" y="13.9" width="5.8" height="7.0" fill="#eaeaea"/><rect x="63.0" y="13.9" width="5.8" height="7.0" fill="#e1e1e1"/><rect x="0.0" y="20.9" width="5.8" height="7.0" fill="#bebebe"/><rect x="5.7" y="20.9" width="5.8" height="7.0" fill="#cdcdcd"/><rect x="11.5" y="20.9" width="5.8" height="7.0" fill="#d0d0d0"/><rect x="17.2" y="20.9" width="5.8" height="7.0" fill="#d2d2d2"/><rect x="22.9" y="20.9" width="5.8" height="7.0" fill="#d3d3d3"/><rect x="28.6" y="20.9" width="5.8" height="7.0" fill="#dddddd"/><rect x="34.4" y="20.9" width="5.8" height="7.0" fill="#dcdcdc"/><rect x="40.1" y="20.9" width="5.8" height="7.0" fill="#dfdfdf"/><rect x="45.8" y="20.9" width="5.8" height="7.0" fill="#dfdfdf"/><rect x="51.5" y="20.9" width="5.8" height="7.0" fill="#e2e2e2"/><rect x="57.3" y="20.9" width="5.8" height="7.0" fill="#e0e0e0"/><rect x="63.0" y="20.9" width="5.8" height="7.0" fill="#e2e2e2"/></svg>
<div style="left:432.6px;top:352px;width:612.4px;height:18.5px;background:#0470c1;"></div>
<span style="left:441.25px;top:358.62px;font-size:5.3px;line-height:6.36px;color:#fff;white-space:nowrap;transform:scaleX(0.958);transform-origin:0 50%;font-weight:bold;">Cobertura</span>
<span style="left:499.5px;top:358.62px;font-size:5.3px;line-height:6.36px;color:#fff;white-space:nowrap;transform:scaleX(0.898);transform-origin:0 50%;font-weight:bold;">Medio</span>
<span style="left:555.75px;top:358.62px;font-size:5.3px;line-height:6.36px;color:#fff;white-space:nowrap;transform:scaleX(0.938);transform-origin:0 50%;font-weight:bold;">Ubicaci&oacute;n</span>
<span style="left:603.25px;top:358.62px;font-size:5.3px;line-height:6.36px;color:#fff;white-space:nowrap;transform:scaleX(0.946);transform-origin:0 50%;font-weight:bold;">Tipo de Publicacion</span>
<span style="left:667px;top:355.22px;font-size:5.3px;line-height:6.36px;color:#fff;white-space:nowrap;transform:scaleX(0.952);transform-origin:0 50%;font-weight:bold;">Referencias</span>
<span style="left:669.4px;top:361.42px;font-size:5.3px;line-height:6.36px;color:#fff;white-space:nowrap;transform:scaleX(0.93);transform-origin:0 50%;font-weight:bold;">Materiales</span>
<span style="left:725.5px;top:355.22px;font-size:5.3px;line-height:6.36px;color:#fff;white-space:nowrap;transform:scaleX(1.013);transform-origin:0 50%;font-weight:bold;">Fechas</span>
<span style="left:786.75px;top:354.82px;font-size:5.3px;line-height:6.36px;color:#fff;white-space:nowrap;transform:scaleX(0.949);transform-origin:0 50%;font-weight:bold;">Costo</span>
<span style="left:781px;top:361.02px;font-size:5.3px;line-height:6.36px;color:#fff;white-space:nowrap;transform:scaleX(0.93);transform-origin:0 50%;font-weight:bold;">Cds x Ctos</span>
<span style="left:829.75px;top:358.62px;font-size:5.3px;line-height:6.36px;color:#fff;white-space:nowrap;transform:scaleX(0.918);transform-origin:0 50%;font-weight:bold;">N&ordm; Elementos</span>
<span style="left:869.25px;top:358.62px;font-size:5.3px;line-height:6.36px;color:#fff;white-space:nowrap;transform:scaleX(0.944);transform-origin:0 50%;font-weight:bold;">Valor Bruto Unitario</span>
<span style="left:932.5px;top:358.62px;font-size:5.3px;line-height:6.36px;color:#fff;white-space:nowrap;transform:scaleX(0.955);transform-origin:0 50%;font-weight:bold;">Dcto%</span>
<span style="left:971.25px;top:358.62px;font-size:5.3px;line-height:6.36px;color:#fff;white-space:nowrap;transform:scaleX(0.956);transform-origin:0 50%;font-weight:bold;">Total Neto</span>
<span style="left:1021.25px;top:358.62px;font-size:5.3px;line-height:6.36px;color:#fff;white-space:nowrap;transform:scaleX(0.888);transform-origin:0 50%;font-weight:bold;">IVA</span>
<div style="left:705.5px;top:364.5px;width:59px;height:6px;background:#c6c6c6;"></div>
<span style="left:713.9px;top:364.88px;font-size:4.7px;line-height:5.64px;color:#000;white-space:nowrap;transform:scaleX(1.051);transform-origin:0 50%;font-weight:bold;">Inicio</span>
<span style="left:746.2px;top:364.88px;font-size:4.7px;line-height:5.64px;color:#000;white-space:nowrap;transform:scaleX(1.064);transform-origin:0 50%;font-weight:bold;">Fin</span>
<span style="left:434.25px;top:380.13px;font-size:5.4px;line-height:6.48px;color:#1e1e1e;white-space:nowrap;transform:scaleX(0.818);transform-origin:0 50%;">CUERNAVACA,</span>
<span style="left:434.25px;top:385.93px;font-size:5.4px;line-height:6.48px;color:#1e1e1e;white-space:nowrap;transform:scaleX(0.709);transform-origin:0 50%;">MOR.</span>
<span style="left:475.6px;top:383.03px;font-size:5.4px;line-height:6.48px;color:#1e1e1e;white-space:nowrap;transform:scaleX(0.578);transform-origin:0 50%;">MUPI</span>
<span style="left:598.9px;top:383.03px;font-size:5.4px;line-height:6.48px;color:#1e1e1e;white-space:nowrap;transform:scaleX(0.578);transform-origin:0 50%;">MUPI</span>
<span style="left:659px;top:383.15px;font-size:5.2px;line-height:6.24px;color:#1e1e1e;white-space:nowrap;transform:scaleX(0.692);transform-origin:0 50%;">A</span>
<span style="left:709.5px;top:383.27px;font-size:5px;line-height:6.0px;color:#1e1e1e;white-space:nowrap;transform:scaleX(0.871);transform-origin:0 50%;">01/01/2024</span>
<span style="left:738.8px;top:383.27px;font-size:5px;line-height:6.0px;color:#1e1e1e;white-space:nowrap;transform:scaleX(0.879);transform-origin:0 50%;">08/01/2024</span>
<span style="left:784.4px;top:383.27px;font-size:5px;line-height:6.0px;color:#1e1e1e;white-space:nowrap;transform:scaleX(0.897);transform-origin:0 50%;">$ 2.100,00</span>
<span style="left:844.6px;top:383.27px;font-size:5px;line-height:6.0px;color:#1e1e1e;white-space:nowrap;transform:scaleX(0.647);transform-origin:0 50%;">1</span>
<span style="left:897.3px;top:383.27px;font-size:5px;line-height:6.0px;color:#1e1e1e;white-space:nowrap;transform:scaleX(0.897);transform-origin:0 50%;">$ 2.100,00</span>
<span style="left:982.8px;top:383.27px;font-size:5px;line-height:6.0px;color:#1e1e1e;white-space:nowrap;transform:scaleX(0.897);transform-origin:0 50%;">$ 2.100,00</span>
<span style="left:1026.6px;top:383.27px;font-size:5px;line-height:6.0px;color:#1e1e1e;white-space:nowrap;transform:scaleX(0.915);transform-origin:0 50%;">$ 336,00</span>
<span style="left:434.25px;top:410.88px;font-size:5.4px;line-height:6.48px;color:#1e1e1e;white-space:nowrap;transform:scaleX(0.818);transform-origin:0 50%;">CUERNAVACA,</span>
<span style="left:434.25px;top:416.68px;font-size:5.4px;line-height:6.48px;color:#1e1e1e;white-space:nowrap;transform:scaleX(0.709);transform-origin:0 50%;">MOR.</span>
<span style="left:475.6px;top:413.78px;font-size:5.4px;line-height:6.48px;color:#1e1e1e;white-space:nowrap;transform:scaleX(0.578);transform-origin:0 50%;">MUPI</span>
<span style="left:598.9px;top:413.78px;font-size:5.4px;line-height:6.48px;color:#1e1e1e;white-space:nowrap;transform:scaleX(0.578);transform-origin:0 50%;">MUPI</span>
<span style="left:659px;top:413.9px;font-size:5.2px;line-height:6.24px;color:#1e1e1e;white-space:nowrap;transform:scaleX(0.692);transform-origin:0 50%;">A</span>
<span style="left:709.5px;top:414.02px;font-size:5px;line-height:6.0px;color:#1e1e1e;white-space:nowrap;transform:scaleX(0.871);transform-origin:0 50%;">09/01/2024</span>
<span style="left:738.8px;top:414.02px;font-size:5px;line-height:6.0px;color:#1e1e1e;white-space:nowrap;transform:scaleX(0.879);transform-origin:0 50%;">22/01/2024</span>
<span style="left:784.4px;top:414.02px;font-size:5px;line-height:6.0px;color:#1e1e1e;white-space:nowrap;transform:scaleX(0.897);transform-origin:0 50%;">$ 2.100,00</span>
<span style="left:844.6px;top:414.02px;font-size:5px;line-height:6.0px;color:#1e1e1e;white-space:nowrap;transform:scaleX(0.647);transform-origin:0 50%;">1</span>
<span style="left:897.3px;top:414.02px;font-size:5px;line-height:6.0px;color:#1e1e1e;white-space:nowrap;transform:scaleX(0.897);transform-origin:0 50%;">$ 2.100,00</span>
<span style="left:982.8px;top:414.02px;font-size:5px;line-height:6.0px;color:#1e1e1e;white-space:nowrap;transform:scaleX(0.897);transform-origin:0 50%;">$ 2.100,00</span>
<span style="left:1026.6px;top:414.02px;font-size:5px;line-height:6.0px;color:#1e1e1e;white-space:nowrap;transform:scaleX(0.915);transform-origin:0 50%;">$ 336,00</span>
<span style="left:434.25px;top:441.63px;font-size:5.4px;line-height:6.48px;color:#1e1e1e;white-space:nowrap;transform:scaleX(0.818);transform-origin:0 50%;">CUERNAVACA,</span>
<span style="left:434.25px;top:447.43px;font-size:5.4px;line-height:6.48px;color:#1e1e1e;white-space:nowrap;transform:scaleX(0.709);transform-origin:0 50%;">MOR.</span>
<span style="left:475.6px;top:444.53px;font-size:5.4px;line-height:6.48px;color:#1e1e1e;white-space:nowrap;transform:scaleX(0.578);transform-origin:0 50%;">MUPI</span>
<span style="left:598.9px;top:444.53px;font-size:5.4px;line-height:6.48px;color:#1e1e1e;white-space:nowrap;transform:scaleX(0.578);transform-origin:0 50%;">MUPI</span>
<span style="left:659px;top:444.65px;font-size:5.2px;line-height:6.24px;color:#1e1e1e;white-space:nowrap;transform:scaleX(0.692);transform-origin:0 50%;">A</span>
<span style="left:709.5px;top:444.77px;font-size:5px;line-height:6.0px;color:#1e1e1e;white-space:nowrap;transform:scaleX(0.871);transform-origin:0 50%;">23/01/2024</span>
<span style="left:738.8px;top:444.77px;font-size:5px;line-height:6.0px;color:#1e1e1e;white-space:nowrap;transform:scaleX(0.879);transform-origin:0 50%;">31/01/2024</span>
<span style="left:784.4px;top:444.77px;font-size:5px;line-height:6.0px;color:#1e1e1e;white-space:nowrap;transform:scaleX(0.897);transform-origin:0 50%;">$ 2.100,00</span>
<span style="left:844.6px;top:444.77px;font-size:5px;line-height:6.0px;color:#1e1e1e;white-space:nowrap;transform:scaleX(0.647);transform-origin:0 50%;">1</span>
<span style="left:897.3px;top:444.77px;font-size:5px;line-height:6.0px;color:#1e1e1e;white-space:nowrap;transform:scaleX(0.897);transform-origin:0 50%;">$ 2.100,00</span>
<span style="left:982.8px;top:444.77px;font-size:5px;line-height:6.0px;color:#1e1e1e;white-space:nowrap;transform:scaleX(0.897);transform-origin:0 50%;">$ 2.100,00</span>
<span style="left:1026.6px;top:444.77px;font-size:5px;line-height:6.0px;color:#1e1e1e;white-space:nowrap;transform:scaleX(0.915);transform-origin:0 50%;">$ 336,00</span>
<span style="left:434.25px;top:472.38px;font-size:5.4px;line-height:6.48px;color:#1e1e1e;white-space:nowrap;transform:scaleX(0.818);transform-origin:0 50%;">CUERNAVACA,</span>
<span style="left:434.25px;top:478.18px;font-size:5.4px;line-height:6.48px;color:#1e1e1e;white-space:nowrap;transform:scaleX(0.709);transform-origin:0 50%;">MOR.</span>
<span style="left:475.6px;top:475.28px;font-size:5.4px;line-height:6.48px;color:#1e1e1e;white-space:nowrap;transform:scaleX(0.578);transform-origin:0 50%;">MUPI</span>
<span style="left:598.9px;top:475.28px;font-size:5.4px;line-height:6.48px;color:#1e1e1e;white-space:nowrap;transform:scaleX(0.578);transform-origin:0 50%;">MUPI</span>
<span style="left:659px;top:475.4px;font-size:5.2px;line-height:6.24px;color:#1e1e1e;white-space:nowrap;transform:scaleX(0.692);transform-origin:0 50%;">A</span>
<span style="left:709.5px;top:475.52px;font-size:5px;line-height:6.0px;color:#1e1e1e;white-space:nowrap;transform:scaleX(0.871);transform-origin:0 50%;">01/01/2024</span>
<span style="left:738.8px;top:475.52px;font-size:5px;line-height:6.0px;color:#1e1e1e;white-space:nowrap;transform:scaleX(0.879);transform-origin:0 50%;">08/01/2024</span>
<span style="left:784.4px;top:475.52px;font-size:5px;line-height:6.0px;color:#1e1e1e;white-space:nowrap;transform:scaleX(0.897);transform-origin:0 50%;">$ 2.100,00</span>
<span style="left:844.6px;top:475.52px;font-size:5px;line-height:6.0px;color:#1e1e1e;white-space:nowrap;transform:scaleX(0.647);transform-origin:0 50%;">1</span>
<span style="left:897.3px;top:475.52px;font-size:5px;line-height:6.0px;color:#1e1e1e;white-space:nowrap;transform:scaleX(0.897);transform-origin:0 50%;">$ 2.100,00</span>
<span style="left:982.8px;top:475.52px;font-size:5px;line-height:6.0px;color:#1e1e1e;white-space:nowrap;transform:scaleX(0.897);transform-origin:0 50%;">$ 2.100,00</span>
<span style="left:1026.6px;top:475.52px;font-size:5px;line-height:6.0px;color:#1e1e1e;white-space:nowrap;transform:scaleX(0.915);transform-origin:0 50%;">$ 336,00</span>
<span style="left:434.25px;top:503.13px;font-size:5.4px;line-height:6.48px;color:#1e1e1e;white-space:nowrap;transform:scaleX(0.818);transform-origin:0 50%;">CUERNAVACA,</span>
<span style="left:434.25px;top:508.93px;font-size:5.4px;line-height:6.48px;color:#1e1e1e;white-space:nowrap;transform:scaleX(0.709);transform-origin:0 50%;">MOR.</span>
<span style="left:475.6px;top:506.03px;font-size:5.4px;line-height:6.48px;color:#1e1e1e;white-space:nowrap;transform:scaleX(0.578);transform-origin:0 50%;">MUPI</span>
<span style="left:598.9px;top:506.03px;font-size:5.4px;line-height:6.48px;color:#1e1e1e;white-space:nowrap;transform:scaleX(0.578);transform-origin:0 50%;">MUPI</span>
<span style="left:659px;top:506.15px;font-size:5.2px;line-height:6.24px;color:#1e1e1e;white-space:nowrap;transform:scaleX(0.692);transform-origin:0 50%;">A</span>
<span style="left:709.5px;top:506.27px;font-size:5px;line-height:6.0px;color:#1e1e1e;white-space:nowrap;transform:scaleX(0.871);transform-origin:0 50%;">09/01/2024</span>
<span style="left:738.8px;top:506.27px;font-size:5px;line-height:6.0px;color:#1e1e1e;white-space:nowrap;transform:scaleX(0.879);transform-origin:0 50%;">22/01/2024</span>
<span style="left:784.4px;top:506.27px;font-size:5px;line-height:6.0px;color:#1e1e1e;white-space:nowrap;transform:scaleX(0.897);transform-origin:0 50%;">$ 2.100,00</span>
<span style="left:844.6px;top:506.27px;font-size:5px;line-height:6.0px;color:#1e1e1e;white-space:nowrap;transform:scaleX(0.647);transform-origin:0 50%;">1</span>
<span style="left:897.3px;top:506.27px;font-size:5px;line-height:6.0px;color:#1e1e1e;white-space:nowrap;transform:scaleX(0.897);transform-origin:0 50%;">$ 2.100,00</span>
<span style="left:982.8px;top:506.27px;font-size:5px;line-height:6.0px;color:#1e1e1e;white-space:nowrap;transform:scaleX(0.897);transform-origin:0 50%;">$ 2.100,00</span>
<span style="left:1026.6px;top:506.27px;font-size:5px;line-height:6.0px;color:#1e1e1e;white-space:nowrap;transform:scaleX(0.915);transform-origin:0 50%;">$ 336,00</span>
<span style="left:434.25px;top:533.88px;font-size:5.4px;line-height:6.48px;color:#1e1e1e;white-space:nowrap;transform:scaleX(0.818);transform-origin:0 50%;">CUERNAVACA,</span>
<span style="left:434.25px;top:539.68px;font-size:5.4px;line-height:6.48px;color:#1e1e1e;white-space:nowrap;transform:scaleX(0.709);transform-origin:0 50%;">MOR.</span>
<span style="left:475.6px;top:536.78px;font-size:5.4px;line-height:6.48px;color:#1e1e1e;white-space:nowrap;transform:scaleX(0.578);transform-origin:0 50%;">MUPI</span>
<span style="left:598.9px;top:536.78px;font-size:5.4px;line-height:6.48px;color:#1e1e1e;white-space:nowrap;transform:scaleX(0.578);transform-origin:0 50%;">MUPI</span>
<span style="left:659px;top:536.9px;font-size:5.2px;line-height:6.24px;color:#1e1e1e;white-space:nowrap;transform:scaleX(0.692);transform-origin:0 50%;">A</span>
<span style="left:709.5px;top:537.02px;font-size:5px;line-height:6.0px;color:#1e1e1e;white-space:nowrap;transform:scaleX(0.871);transform-origin:0 50%;">23/01/2024</span>
<span style="left:738.8px;top:537.02px;font-size:5px;line-height:6.0px;color:#1e1e1e;white-space:nowrap;transform:scaleX(0.879);transform-origin:0 50%;">31/01/2024</span>
<span style="left:784.4px;top:537.02px;font-size:5px;line-height:6.0px;color:#1e1e1e;white-space:nowrap;transform:scaleX(0.897);transform-origin:0 50%;">$ 2.100,00</span>
<span style="left:844.6px;top:537.02px;font-size:5px;line-height:6.0px;color:#1e1e1e;white-space:nowrap;transform:scaleX(0.647);transform-origin:0 50%;">1</span>
<span style="left:897.3px;top:537.02px;font-size:5px;line-height:6.0px;color:#1e1e1e;white-space:nowrap;transform:scaleX(0.897);transform-origin:0 50%;">$ 2.100,00</span>
<span style="left:982.8px;top:537.02px;font-size:5px;line-height:6.0px;color:#1e1e1e;white-space:nowrap;transform:scaleX(0.897);transform-origin:0 50%;">$ 2.100,00</span>
<span style="left:1026.6px;top:537.02px;font-size:5px;line-height:6.0px;color:#1e1e1e;white-space:nowrap;transform:scaleX(0.915);transform-origin:0 50%;">$ 336,00</span>
<span style="left:434.25px;top:564.63px;font-size:5.4px;line-height:6.48px;color:#1e1e1e;white-space:nowrap;transform:scaleX(0.818);transform-origin:0 50%;">CUERNAVACA,</span>
<span style="left:434.25px;top:570.43px;font-size:5.4px;line-height:6.48px;color:#1e1e1e;white-space:nowrap;transform:scaleX(0.709);transform-origin:0 50%;">MOR.</span>
<span style="left:475.6px;top:567.53px;font-size:5.4px;line-height:6.48px;color:#1e1e1e;white-space:nowrap;transform:scaleX(0.578);transform-origin:0 50%;">MUPI</span>
<span style="left:598.9px;top:567.53px;font-size:5.4px;line-height:6.48px;color:#1e1e1e;white-space:nowrap;transform:scaleX(0.578);transform-origin:0 50%;">MUPI</span>
<span style="left:659px;top:567.65px;font-size:5.2px;line-height:6.24px;color:#1e1e1e;white-space:nowrap;transform:scaleX(0.692);transform-origin:0 50%;">A</span>
<span style="left:709.5px;top:567.77px;font-size:5px;line-height:6.0px;color:#1e1e1e;white-space:nowrap;transform:scaleX(0.871);transform-origin:0 50%;">01/01/2024</span>
<span style="left:738.8px;top:567.77px;font-size:5px;line-height:6.0px;color:#1e1e1e;white-space:nowrap;transform:scaleX(0.879);transform-origin:0 50%;">08/01/2024</span>
<span style="left:784.4px;top:567.77px;font-size:5px;line-height:6.0px;color:#1e1e1e;white-space:nowrap;transform:scaleX(0.897);transform-origin:0 50%;">$ 2.100,00</span>
<span style="left:844.6px;top:567.77px;font-size:5px;line-height:6.0px;color:#1e1e1e;white-space:nowrap;transform:scaleX(0.647);transform-origin:0 50%;">1</span>
<span style="left:897.3px;top:567.77px;font-size:5px;line-height:6.0px;color:#1e1e1e;white-space:nowrap;transform:scaleX(0.897);transform-origin:0 50%;">$ 2.100,00</span>
<span style="left:982.8px;top:567.77px;font-size:5px;line-height:6.0px;color:#1e1e1e;white-space:nowrap;transform:scaleX(0.897);transform-origin:0 50%;">$ 2.100,00</span>
<span style="left:1026.6px;top:567.77px;font-size:5px;line-height:6.0px;color:#1e1e1e;white-space:nowrap;transform:scaleX(0.915);transform-origin:0 50%;">$ 336,00</span>
<svg style="left:423px;top:232px" width="639" height="343" viewBox="423 232 639 343"><path d="M705.50 364.50H764.60" fill="none" stroke="#111" stroke-width="0.9"/><path d="M735.20 365.00V370.50" fill="none" stroke="#1a1a1a" stroke-width="0.8"/><path d="M432.60 352.00H1045.00" fill="none" stroke="#1a1a1a" stroke-width="1.4"/><path d="M432.60 370.50H1045.00M432.60 401.25H1045.00M432.60 432.00H1045.00M432.60 462.75H1045.00M432.60 493.50H1045.00M432.60 524.25H1045.00M432.60 555.00H1045.00" fill="none" stroke="#444" stroke-width="0.8"/></svg>
<svg style="left:540px;top:371px" width="55.5" height="204" viewBox="0 0 55.5 204" shape-rendering="crispEdges"><rect x="0.0" y="0.0" width="5.6" height="5.2" fill="#bfbfbf"/><rect x="5.5" y="0.0" width="5.6" height="5.2" fill="#b5b5b5"/><rect x="11.1" y="0.0" width="5.6" height="5.2" fill="#c7c7c7"/><rect x="16.6" y="0.0" width="5.6" height="5.2" fill="#e5e5e5"/><rect x="22.2" y="0.0" width="5.6" height="5.2" fill="#f8f8f8"/><rect x="27.8" y="0.0" width="5.6" height="5.2" fill="#f5f5f5"/><rect x="33.3" y="0.0" width="5.6" height="5.2" fill="#fcfcfc"/><rect x="38.9" y="0.0" width="5.6" height="5.2" fill="#f8f8f8"/><rect x="44.4" y="0.0" width="5.6" height="5.2" fill="#fcfcfc"/><rect x="49.9" y="0.0" width="5.6" height="5.2" fill="#f5f5f5"/><rect x="0.0" y="5.1" width="5.6" height="5.2" fill="#d1d1d1"/><rect x="5.5" y="5.1" width="5.6" height="5.2" fill="#dcdcdc"/><rect x="11.1" y="5.1" width="5.6" height="5.2" fill="#e9e9e9"/><rect x="16.6" y="5.1" width="5.6" height="5.2" fill="#f3f3f3"/><rect x="22.2" y="5.1" width="5.6" height="5.2" fill="#f8f8f8"/><rect x="27.8" y="5.1" width="5.6" height="5.2" fill="#fbfbfb"/><rect x="33.3" y="5.1" width="5.6" height="5.2" fill="#fcfcfc"/><rect x="38.9" y="5.1" width="5.6" height="5.2" fill="#f6f6f6"/><rect x="44.4" y="5.1" width="5.6" height="5.2" fill="#fcfcfc"/><rect x="49.9" y="5.1" width="5.6" height="5.2" fill="#f8f8f8"/><rect x="0.0" y="10.2" width="5.6" height="5.2" fill="#cbcbcb"/><rect x="5.5" y="10.2" width="5.6" height="5.2" fill="#cecece"/><rect x="11.1" y="10.2" width="5.6" height="5.2" fill="#c8c8c8"/><rect x="16.6" y="10.2" width="5.6" height="5.2" fill="#c6c6c6"/><rect x="22.2" y="10.2" width="5.6" height="5.2" fill="#c4c4c4"/><rect x="27.8" y="10.2" width="5.6" height="5.2" fill="#c0c0c0"/><rect x="33.3" y="10.2" width="5.6" height="5.2" fill="#bcbcbc"/><rect x="38.9" y="10.2" width="5.6" height="5.2" fill="#bbbbbb"/><rect x="44.4" y="10.2" width="5.6" height="5.2" fill="#c4c4c4"/><rect x="49.9" y="10.2" width="5.6" height="5.2" fill="#e4e4e4"/><rect x="0.0" y="15.4" width="5.6" height="5.2" fill="#cbcbcb"/><rect x="5.5" y="15.4" width="5.6" height="5.2" fill="#c9c9c9"/><rect x="11.1" y="15.4" width="5.6" height="5.2" fill="#bcbcbc"/><rect x="16.6" y="15.4" width="5.6" height="5.2" fill="#bcbcbc"/><rect x="22.2" y="15.4" width="5.6" height="5.2" fill="#bababa"/><rect x="27.8" y="15.4" width="5.6" height="5.2" fill="#b1b1b1"/><rect x="33.3" y="15.4" width="5.6" height="5.2" fill="#b0b0b0"/><rect x="38.9" y="15.4" width="5.6" height="5.2" fill="#b4b4b4"/><rect x="44.4" y="15.4" width="5.6" height="5.2" fill="#bcbcbc"/><rect x="49.9" y="15.4" width="5.6" height="5.2" fill="#d5d5d5"/><rect x="0.0" y="20.5" width="5.6" height="5.2" fill="#c6c6c6"/><rect x="5.5" y="20.5" width="5.6" height="5.2" fill="#bfbfbf"/><rect x="11.1" y="20.5" width="5.6" height="5.2" fill="#bdbdbd"/><rect x="16.6" y="20.5" width="5.6" height="5.2" fill="#c2c2c2"/><rect x="22.2" y="20.5" width="5.6" height="5.2" fill="#c8c8c8"/><rect x="27.8" y="20.5" width="5.6" height="5.2" fill="#cccccc"/><rect x="33.3" y="20.5" width="5.6" height="5.2" fill="#cecece"/><rect x="38.9" y="20.5" width="5.6" height="5.2" fill="#cdcdcd"/><rect x="44.4" y="20.5" width="5.6" height="5.2" fill="#dedede"/><rect x="49.9" y="20.5" width="5.6" height="5.2" fill="#eaeaea"/><rect x="0.0" y="25.6" width="5.6" height="5.2" fill="#c6c6c6"/><rect x="5.5" y="25.6" width="5.6" height="5.2" fill="#c2c2c2"/><rect x="11.1" y="25.6" width="5.6" height="5.2" fill="#d0d0d0"/><rect x="16.6" y="25.6" width="5.6" height="5.2" fill="#c8c8c8"/><rect x="22.2" y="25.6" width="5.6" height="5.2" fill="#cdcdcd"/><rect x="27.8" y="25.6" width="5.6" height="5.2" fill="#dddddd"/><rect x="33.3" y="25.6" width="5.6" height="5.2" fill="#e8e8e8"/><rect x="38.9" y="25.6" width="5.6" height="5.2" fill="#ededed"/><rect x="44.4" y="25.6" width="5.6" height="5.2" fill="#f1f1f1"/><rect x="49.9" y="25.6" width="5.6" height="5.2" fill="#f9f9f9"/><rect x="0.0" y="30.8" width="5.6" height="5.2" fill="#bfbfbf"/><rect x="5.5" y="30.8" width="5.6" height="5.2" fill="#bababa"/><rect x="11.1" y="30.8" width="5.6" height="5.2" fill="#c2c2c2"/><rect x="16.6" y="30.8" width="5.6" height="5.2" fill="#e4e4e4"/><rect x="22.2" y="30.8" width="5.6" height="5.2" fill="#fafafa"/><rect x="27.8" y="30.8" width="5.6" height="5.2" fill="#fafafa"/><rect x="33.3" y="30.8" width="5.6" height="5.2" fill="#f6f6f6"/><rect x="38.9" y="30.8" width="5.6" height="5.2" fill="#f9f9f9"/><rect x="44.4" y="30.8" width="5.6" height="5.2" fill="#fafafa"/><rect x="49.9" y="30.8" width="5.6" height="5.2" fill="#f9f9f9"/><rect x="0.0" y="35.9" width="5.6" height="5.2" fill="#d6d6d6"/><rect x="5.5" y="35.9" width="5.6" height="5.2" fill="#e0e0e0"/><rect x="11.1" y="35.9" width="5.6" height="5.2" fill="#e6e6e6"/><rect x="16.6" y="35.9" width="5.6" height="5.2" fill="#f3f3f3"/><rect x="22.2" y="35.9" width="5.6" height="5.2" fill="#fcfcfc"/><rect x="27.8" y="35.9" width="5.6" height="5.2" fill="#f7f7f7"/><rect x="33.3" y="35.9" width="5.6" height="5.2" fill="#f5f5f5"/><rect x="38.9" y="35.9" width="5.6" height="5.2" fill="#f9f9f9"/><rect x="44.4" y="35.9" width="5.6" height="5.2" fill="#f5f5f5"/><rect x="49.9" y="35.9" width="5.6" height="5.2" fill="#fafafa"/><rect x="0.0" y="41.0" width="5.6" height="5.2" fill="#d1d1d1"/><rect x="5.5" y="41.0" width="5.6" height="5.2" fill="#cbcbcb"/><rect x="11.1" y="41.0" width="5.6" height="5.2" fill="#cacaca"/><rect x="16.6" y="41.0" width="5.6" height="5.2" fill="#c8c8c8"/><rect x="22.2" y="41.0" width="5.6" height="5.2" fill="#c7c7c7"/><rect x="27.8" y="41.0" width="5.6" height="5.2" fill="#c0c0c0"/><rect x="33.3" y="41.0" width="5.6" height="5.2" fill="#c3c3c3"/><rect x="38.9" y="41.0" width="5.6" height="5.2" fill="#bababa"/><rect x="44.4" y="41.0" width="5.6" height="5.2" fill="#c9c9c9"/><rect x="49.9" y="41.0" width="5.6" height="5.2" fill="#dbdbdb"/><rect x="0.0" y="46.1" width="5.6" height="5.2" fill="#c4c4c4"/><rect x="5.5" y="46.1" width="5.6" height="5.2" fill="#cbcbcb"/><rect x="11.1" y="46.1" width="5.6" height="5.2" fill="#bdbdbd"/><rect x="16.6" y="46.1" width="5.6" height="5.2" fill="#bbbbbb"/><rect x="22.2" y="46.1" width="5.6" height="5.2" fill="#bdbdbd"/><rect x="27.8" y="46.1" width="5.6" height="5.2" fill="#b8b8b8"/><rect x="33.3" y="46.1" width="5.6" height="5.2" fill="#b2b2b2"/><rect x="38.9" y="46.1" width="5.6" height="5.2" fill="#b9b9b9"/><rect x="44.4" y="46.1" width="5.6" height="5.2" fill="#bfbfbf"/><rect x="49.9" y="46.1" width="5.6" height="5.2" fill="#dbdbdb"/><rect x="0.0" y="51.2" width="5.6" height="5.2" fill="#c6c6c6"/><rect x="5.5" y="51.2" width="5.6" height="5.2" fill="#c1c1c1"/><rect x="11.1" y="51.2" width="5.6" height="5.2" fill="#bbbbbb"/><rect x="16.6" y="51.2" width="5.6" height="5.2" fill="#c3c3c3"/><rect x="22.2" y="51.2" width="5.6" height="5.2" fill="#c3c3c3"/><rect x="27.8" y="51.2" width="5.6" height="5.2" fill="#c6c6c6"/><rect x="33.3" y="51.2" width="5.6" height="5.2" fill="#cbcbcb"/><rect x="38.9" y="51.2" width="5.6" height="5.2" fill="#d1d1d1"/><rect x="44.4" y="51.2" width="5.6" height="5.2" fill="#dcdcdc"/><rect x="49.9" y="51.2" width="5.6" height="5.2" fill="#e7e7e7"/><rect x="0.0" y="56.4" width="5.6" height="5.2" fill="#c7c7c7"/><rect x="5.5" y="56.4" width="5.6" height="5.2" fill="#cacaca"/><rect x="11.1" y="56.4" width="5.6" height="5.2" fill="#d4d4d4"/><rect x="16.6" y="56.4" width="5.6" height="5.2" fill="#c7c7c7"/><rect x="22.2" y="56.4" width="5.6" height="5.2" fill="#cdcdcd"/><rect x="27.8" y="56.4" width="5.6" height="5.2" fill="#e0e0e0"/><rect x="33.3" y="56.4" width="5.6" height="5.2" fill="#e8e8e8"/><rect x="38.9" y="56.4" width="5.6" height="5.2" fill="#f4f4f4"/><rect x="44.4" y="56.4" width="5.6" height="5.2" fill="#ededed"/><rect x="49.9" y="56.4" width="5.6" height="5.2" fill="#f9f9f9"/><rect x="0.0" y="61.5" width="5.6" height="5.2" fill="#c0c0c0"/><rect x="5.5" y="61.5" width="5.6" height="5.2" fill="#b6b6b6"/><rect x="11.1" y="61.5" width="5.6" height="5.2" fill="#c6c6c6"/><rect x="16.6" y="61.5" width="5.6" height="5.2" fill="#dddddd"/><rect x="22.2" y="61.5" width="5.6" height="5.2" fill="#f1f1f1"/><rect x="27.8" y="61.5" width="5.6" height="5.2" fill="#fcfcfc"/><rect x="33.3" y="61.5" width="5.6" height="5.2" fill="#f7f7f7"/><rect x="38.9" y="61.5" width="5.6" height="5.2" fill="#f9f9f9"/><rect x="44.4" y="61.5" width="5.6" height="5.2" fill="#fcfcfc"/><rect x="49.9" y="61.5" width="5.6" height="5.2" fill="#f7f7f7"/><rect x="0.0" y="66.6" width="5.6" height="5.2" fill="#cfcfcf"/><rect x="5.5" y="66.6" width="5.6" height="5.2" fill="#dcdcdc"/><rect x="11.1" y="66.6" width="5.6" height="5.2" fill="#ededed"/><rect x="16.6" y="66.6" width="5.6" height="5.2" fill="#f4f4f4"/><rect x="22.2" y="66.6" width="5.6" height="5.2" fill="#fbfbfb"/><rect x="27.8" y="66.6" width="5.6" height="5.2" fill="#f5f5f5"/><rect x="33.3" y="66.6" width="5.6" height="5.2" fill="#f8f8f8"/><rect x="38.9" y="66.6" width="5.6" height="5.2" fill="#fcfcfc"/><rect x="44.4" y="66.6" width="5.6" height="5.2" fill="#fafafa"/><rect x="49.9" y="66.6" width="5.6" height="5.2" fill="#f9f9f9"/><rect x="0.0" y="71.8" width="5.6" height="5.2" fill="#d2d2d2"/><rect x="5.5" y="71.8" width="5.6" height="5.2" fill="#d5d5d5"/><rect x="11.1" y="71.8" width="5.6" height="5.2" fill="#c8c8c8"/><rect x="16.6" y="71.8" width="5.6" height="5.2" fill="#c4c4c4"/><rect x="22.2" y="71.8" width="5.6" height="5.2" fill="#c2c2c2"/><rect x="27.8" y="71.8" width="5.6" height="5.2" fill="#c4c4c4"/><rect x="33.3" y="71.8" width="5.6" height="5.2" fill="#bababa"/><rect x="38.9" y="71.8" width="5.6" height="5.2" fill="#c1c1c1"/><rect x="44.4" y="71.8" width="5.6" height="5.2" fill="#c7c7c7"/><rect x="49.9" y="71.8" width="5.6" height="5.2" fill="#dedede"/><rect x="0.0" y="76.9" width="5.6" height="5.2" fill="#c4c4c4"/><rect x="5.5" y="76.9" width="5.6" height="5.2" fill="#cbcbcb"/><rect x="11.1" y="76.9" width="5.6" height="5.2" fill="#bcbcbc"/><rect x="16.6" y="76.9" width="5.6" height="5.2" fill="#c4c4c4"/><rect x="22.2" y="76.9" width="5.6" height="5.2" fill="#c0c0c0"/><rect x="27.8" y="76.9" width="5.6" height="5.2" fill="#b2b2b2"/><rect x="33.3" y="76.9" width="5.6" height="5.2" fill="#afafaf"/><rect x="38.9" y="76.9" width="5.6" height="5.2" fill="#b7b7b7"/><rect x="44.4" y="76.9" width="5.6" height="5.2" fill="#bfbfbf"/><rect x="49.9" y="76.9" width="5.6" height="5.2" fill="#d5d5d5"/><rect x="0.0" y="82.0" width="5.6" height="5.2" fill="#c2c2c2"/><rect x="5.5" y="82.0" width="5.6" height="5.2" fill="#c0c0c0"/><rect x="11.1" y="82.0" width="5.6" height="5.2" fill="#bebebe"/><rect x="16.6" y="82.0" width="5.6" height="5.2" fill="#bcbcbc"/><rect x="22.2" y="82.0" width="5.6" height="5.2" fill="#c5c5c5"/><rect x="27.8" y="82.0" width="5.6" height="5.2" fill="#cbcbcb"/><rect x="33.3" y="82.0" width="5.6" height="5.2" fill="#cdcdcd"/><rect x="38.9" y="82.0" width="5.6" height="5.2" fill="#d3d3d3"/><rect x="44.4" y="82.0" width="5.6" height="5.2" fill="#e2e2e2"/><rect x="49.9" y="82.0" width="5.6" height="5.2" fill="#ebebeb"/><rect x="0.0" y="87.1" width="5.6" height="5.2" fill="#c7c7c7"/><rect x="5.5" y="87.1" width="5.6" height="5.2" fill="#c9c9c9"/><rect x="11.1" y="87.1" width="5.6" height="5.2" fill="#cfcfcf"/><rect x="16.6" y="87.1" width="5.6" height="5.2" fill="#c6c6c6"/><rect x="22.2" y="87.1" width="5.6" height="5.2" fill="#d2d2d2"/><rect x="27.8" y="87.1" width="5.6" height="5.2" fill="#e1e1e1"/><rect x="33.3" y="87.1" width="5.6" height="5.2" fill="#e6e6e6"/><rect x="38.9" y="87.1" width="5.6" height="5.2" fill="#ededed"/><rect x="44.4" y="87.1" width="5.6" height="5.2" fill="#f2f2f2"/><rect x="49.9" y="87.1" width="5.6" height="5.2" fill="#fcfcfc"/><rect x="0.0" y="92.2" width="5.6" height="5.2" fill="#b8b8b8"/><rect x="5.5" y="92.2" width="5.6" height="5.2" fill="#bbbbbb"/><rect x="11.1" y="92.2" width="5.6" height="5.2" fill="#c9c9c9"/><rect x="16.6" y="92.2" width="5.6" height="5.2" fill="#e0e0e0"/><rect x="22.2" y="92.2" width="5.6" height="5.2" fill="#f2f2f2"/><rect x="27.8" y="92.2" width="5.6" height="5.2" fill="#f6f6f6"/><rect x="33.3" y="92.2" width="5.6" height="5.2" fill="#fcfcfc"/><rect x="38.9" y="92.2" width="5.6" height="5.2" fill="#f9f9f9"/><rect x="44.4" y="92.2" width="5.6" height="5.2" fill="#fcfcfc"/><rect x="49.9" y="92.2" width="5.6" height="5.2" fill="#fcfcfc"/><rect x="0.0" y="97.4" width="5.6" height="5.2" fill="#d7d7d7"/><rect x="5.5" y="97.4" width="5.6" height="5.2" fill="#e0e0e0"/><rect x="11.1" y="97.4" width="5.6" height="5.2" fill="#e5e5e5"/><rect x="16.6" y="97.4" width="5.6" height="5.2" fill="#f1f1f1"/><rect x="22.2" y="97.4" width="5.6" height="5.2" fill="#fcfcfc"/><rect x="27.8" y="97.4" width="5.6" height="5.2" fill="#fcfcfc"/><rect x="33.3" y="97.4" width="5.6" height="5.2" fill="#f5f5f5"/><rect x="38.9" y="97.4" width="5.6" height="5.2" fill="#f9f9f9"/><rect x="44.4" y="97.4" width="5.6" height="5.2" fill="#fafafa"/><rect x="49.9" y="97.4" width="5.6" height="5.2" fill="#fcfcfc"/><rect x="0.0" y="102.5" width="5.6" height="5.2" fill="#d5d5d5"/><rect x="5.5" y="102.5" width="5.6" height="5.2" fill="#cfcfcf"/><rect x="11.1" y="102.5" width="5.6" height="5.2" fill="#c9c9c9"/><rect x="16.6" y="102.5" width="5.6" height="5.2" fill="#c6c6c6"/><rect x="22.2" y="102.5" width="5.6" height="5.2" fill="#c6c6c6"/><rect x="27.8" y="102.5" width="5.6" height="5.2" fill="#bfbfbf"/><rect x="33.3" y="102.5" width="5.6" height="5.2" fill="#c4c4c4"/><rect x="38.9" y="102.5" width="5.6" height="5.2" fill="#bcbcbc"/><rect x="44.4" y="102.5" width="5.6" height="5.2" fill="#cbcbcb"/><rect x="49.9" y="102.5" width="5.6" height="5.2" fill="#dbdbdb"/><rect x="0.0" y="107.6" width="5.6" height="5.2" fill="#c9c9c9"/><rect x="5.5" y="107.6" width="5.6" height="5.2" fill="#cacaca"/><rect x="11.1" y="107.6" width="5.6" height="5.2" fill="#bebebe"/><rect x="16.6" y="107.6" width="5.6" height="5.2" fill="#bfbfbf"/><rect x="22.2" y="107.6" width="5.6" height="5.2" fill="#c4c4c4"/><rect x="27.8" y="107.6" width="5.6" height="5.2" fill="#b5b5b5"/><rect x="33.3" y="107.6" width="5.6" height="5.2" fill="#b4b4b4"/><rect x="38.9" y="107.6" width="5.6" height="5.2" fill="#b5b5b5"/><rect x="44.4" y="107.6" width="5.6" height="5.2" fill="#c2c2c2"/><rect x="49.9" y="107.6" width="5.6" height="5.2" fill="#dddddd"/><rect x="0.0" y="112.8" width="5.6" height="5.2" fill="#cccccc"/><rect x="5.5" y="112.8" width="5.6" height="5.2" fill="#bfbfbf"/><rect x="11.1" y="112.8" width="5.6" height="5.2" fill="#bfbfbf"/><rect x="16.6" y="112.8" width="5.6" height="5.2" fill="#bebebe"/><rect x="22.2" y="112.8" width="5.6" height="5.2" fill="#c8c8c8"/><rect x="27.8" y="112.8" width="5.6" height="5.2" fill="#c7c7c7"/><rect x="33.3" y="112.8" width="5.6" height="5.2" fill="#d1d1d1"/><rect x="38.9" y="112.8" width="5.6" height="5.2" fill="#d0d0d0"/><rect x="44.4" y="112.8" width="5.6" height="5.2" fill="#dddddd"/><rect x="49.9" y="112.8" width="5.6" height="5.2" fill="#ebebeb"/><rect x="0.0" y="117.9" width="5.6" height="5.2" fill="#c7c7c7"/><rect x="5.5" y="117.9" width="5.6" height="5.2" fill="#c7c7c7"/><rect x="11.1" y="117.9" width="5.6" height="5.2" fill="#d3d3d3"/><rect x="16.6" y="117.9" width="5.6" height="5.2" fill="#c4c4c4"/><rect x="22.2" y="117.9" width="5.6" height="5.2" fill="#d3d3d3"/><rect x="27.8" y="117.9" width="5.6" height="5.2" fill="#dddddd"/><rect x="33.3" y="117.9" width="5.6" height="5.2" fill="#e7e7e7"/><rect x="38.9" y="117.9" width="5.6" height="5.2" fill="#f1f1f1"/><rect x="44.4" y="117.9" width="5.6" height="5.2" fill="#f3f3f3"/><rect x="49.9" y="117.9" width="5.6" height="5.2" fill="#f9f9f9"/><rect x="0.0" y="123.0" width="5.6" height="5.2" fill="#b7b7b7"/><rect x="5.5" y="123.0" width="5.6" height="5.2" fill="#bbbbbb"/><rect x="11.1" y="123.0" width="5.6" height="5.2" fill="#c8c8c8"/><rect x="16.6" y="123.0" width="5.6" height="5.2" fill="#dddddd"/><rect x="22.2" y="123.0" width="5.6" height="5.2" fill="#f9f9f9"/><rect x="27.8" y="123.0" width="5.6" height="5.2" fill="#fcfcfc"/><rect x="33.3" y="123.0" width="5.6" height="5.2" fill="#fcfcfc"/><rect x="38.9" y="123.0" width="5.6" height="5.2" fill="#fcfcfc"/><rect x="44.4" y="123.0" width="5.6" height="5.2" fill="#fbfbfb"/><rect x="49.9" y="123.0" width="5.6" height="5.2" fill="#f9f9f9"/><rect x="0.0" y="128.1" width="5.6" height="5.2" fill="#d8d8d8"/><rect x="5.5" y="128.1" width="5.6" height="5.2" fill="#e3e3e3"/><rect x="11.1" y="128.1" width="5.6" height="5.2" fill="#eeeeee"/><rect x="16.6" y="128.1" width="5.6" height="5.2" fill="#f0f0f0"/><rect x="22.2" y="128.1" width="5.6" height="5.2" fill="#f5f5f5"/><rect x="27.8" y="128.1" width="5.6" height="5.2" fill="#f8f8f8"/><rect x="33.3" y="128.1" width="5.6" height="5.2" fill="#f7f7f7"/><rect x="38.9" y="128.1" width="5.6" height="5.2" fill="#fcfcfc"/><rect x="44.4" y="128.1" width="5.6" height="5.2" fill="#fcfcfc"/><rect x="49.9" y="128.1" width="5.6" height="5.2" fill="#fcfcfc"/><rect x="0.0" y="133.2" width="5.6" height="5.2" fill="#d5d5d5"/><rect x="5.5" y="133.2" width="5.6" height="5.2" fill="#cdcdcd"/><rect x="11.1" y="133.2" width="5.6" height="5.2" fill="#c5c5c5"/><rect x="16.6" y="133.2" width="5.6" height="5.2" fill="#cccccc"/><rect x="22.2" y="133.2" width="5.6" height="5.2" fill="#c4c4c4"/><rect x="27.8" y="133.2" width="5.6" height="5.2" fill="#c4c4c4"/><rect x="33.3" y="133.2" width="5.6" height="5.2" fill="#bababa"/><rect x="38.9" y="133.2" width="5.6" height="5.2" fill="#c1c1c1"/><rect x="44.4" y="133.2" width="5.6" height="5.2" fill="#c5c5c5"/><rect x="49.9" y="133.2" width="5.6" height="5.2" fill="#dddddd"/><rect x="0.0" y="138.4" width="5.6" height="5.2" fill="#c2c2c2"/><rect x="5.5" y="138.4" width="5.6" height="5.2" fill="#c4c4c4"/><rect x="11.1" y="138.4" width="5.6" height="5.2" fill="#bbbbbb"/><rect x="16.6" y="138.4" width="5.6" height="5.2" fill="#bfbfbf"/><rect x="22.2" y="138.4" width="5.6" height="5.2" fill="#bcbcbc"/><rect x="27.8" y="138.4" width="5.6" height="5.2" fill="#b8b8b8"/><rect x="33.3" y="138.4" width="5.6" height="5.2" fill="#b0b0b0"/><rect x="38.9" y="138.4" width="5.6" height="5.2" fill="#b9b9b9"/><rect x="44.4" y="138.4" width="5.6" height="5.2" fill="#bababa"/><rect x="49.9" y="138.4" width="5.6" height="5.2" fill="#d9d9d9"/><rect x="0.0" y="143.5" width="5.6" height="5.2" fill="#c9c9c9"/><rect x="5.5" y="143.5" width="5.6" height="5.2" fill="#bfbfbf"/><rect x="11.1" y="143.5" width="5.6" height="5.2" fill="#c0c0c0"/><rect x="16.6" y="143.5" width="5.6" height="5.2" fill="#c4c4c4"/><rect x="22.2" y="143.5" width="5.6" height="5.2" fill="#c7c7c7"/><rect x="27.8" y="143.5" width="5.6" height="5.2" fill="#c3c3c3"/><rect x="33.3" y="143.5" width="5.6" height="5.2" fill="#d4d4d4"/><rect x="38.9" y="143.5" width="5.6" height="5.2" fill="#cecece"/><rect x="44.4" y="143.5" width="5.6" height="5.2" fill="#dedede"/><rect x="49.9" y="143.5" width="5.6" height="5.2" fill="#e9e9e9"/><rect x="0.0" y="148.6" width="5.6" height="5.2" fill="#c2c2c2"/><rect x="5.5" y="148.6" width="5.6" height="5.2" fill="#c7c7c7"/><rect x="11.1" y="148.6" width="5.6" height="5.2" fill="#d1d1d1"/><rect x="16.6" y="148.6" width="5.6" height="5.2" fill="#c6c6c6"/><rect x="22.2" y="148.6" width="5.6" height="5.2" fill="#d1d1d1"/><rect x="27.8" y="148.6" width="5.6" height="5.2" fill="#dcdcdc"/><rect x="33.3" y="148.6" width="5.6" height="5.2" fill="#ececec"/><rect x="38.9" y="148.6" width="5.6" height="5.2" fill="#f1f1f1"/><rect x="44.4" y="148.6" width="5.6" height="5.2" fill="#ececec"/><rect x="49.9" y="148.6" width="5.6" height="5.2" fill="#fcfcfc"/><rect x="0.0" y="153.8" width="5.6" height="5.2" fill="#bfbfbf"/><rect x="5.5" y="153.8" width="5.6" height="5.2" fill="#b5b5b5"/><rect x="11.1" y="153.8" width="5.6" height="5.2" fill="#c3c3c3"/><rect x="16.6" y="153.8" width="5.6" height="5.2" fill="#dfdfdf"/><rect x="22.2" y="153.8" width="5.6" height="5.2" fill="#f8f8f8"/><rect x="27.8" y="153.8" width="5.6" height="5.2" fill="#fcfcfc"/><rect x="33.3" y="153.8" width="5.6" height="5.2" fill="#fafafa"/><rect x="38.9" y="153.8" width="5.6" height="5.2" fill="#fcfcfc"/><rect x="44.4" y="153.8" width="5.6" height="5.2" fill="#f9f9f9"/><rect x="49.9" y="153.8" width="5.6" height="5.2" fill="#fafafa"/><rect x="0.0" y="158.9" width="5.6" height="5.2" fill="#d1d1d1"/><rect x="5.5" y="158.9" width="5.6" height="5.2" fill="#e1e1e1"/><rect x="11.1" y="158.9" width="5.6" height="5.2" fill="#eaeaea"/><rect x="16.6" y="158.9" width="5.6" height="5.2" fill="#f5f5f5"/><rect x="22.2" y="158.9" width="5.6" height="5.2" fill="#fcfcfc"/><rect x="27.8" y="158.9" width="5.6" height="5.2" fill="#fcfcfc"/><rect x="33.3" y="158.9" width="5.6" height="5.2" fill="#fafafa"/><rect x="38.9" y="158.9" width="5.6" height="5.2" fill="#fcfcfc"/><rect x="44.4" y="158.9" width="5.6" height="5.2" fill="#f7f7f7"/><rect x="49.9" y="158.9" width="5.6" height="5.2" fill="#f7f7f7"/><rect x="0.0" y="164.0" width="5.6" height="5.2" fill="#d4d4d4"/><rect x="5.5" y="164.0" width="5.6" height="5.2" fill="#d1d1d1"/><rect x="11.1" y="164.0" width="5.6" height="5.2" fill="#cbcbcb"/><rect x="16.6" y="164.0" width="5.6" height="5.2" fill="#c9c9c9"/><rect x="22.2" y="164.0" width="5.6" height="5.2" fill="#c5c5c5"/><rect x="27.8" y="164.0" width="5.6" height="5.2" fill="#bcbcbc"/><rect x="33.3" y="164.0" width="5.6" height="5.2" fill="#c3c3c3"/><rect x="38.9" y="164.0" width="5.6" height="5.2" fill="#bbbbbb"/><rect x="44.4" y="164.0" width="5.6" height="5.2" fill="#c7c7c7"/><rect x="49.9" y="164.0" width="5.6" height="5.2" fill="#e5e5e5"/><rect x="0.0" y="169.1" width="5.6" height="5.2" fill="#c2c2c2"/><rect x="5.5" y="169.1" width="5.6" height="5.2" fill="#c8c8c8"/><rect x="11.1" y="169.1" width="5.6" height="5.2" fill="#bbbbbb"/><rect x="16.6" y="169.1" width="5.6" height="5.2" fill="#bfbfbf"/><rect x="22.2" y="169.1" width="5.6" height="5.2" fill="#c3c3c3"/><rect x="27.8" y="169.1" width="5.6" height="5.2" fill="#bababa"/><rect x="33.3" y="169.1" width="5.6" height="5.2" fill="#b5b5b5"/><rect x="38.9" y="169.1" width="5.6" height="5.2" fill="#b3b3b3"/><rect x="44.4" y="169.1" width="5.6" height="5.2" fill="#bfbfbf"/><rect x="49.9" y="169.1" width="5.6" height="5.2" fill="#dddddd"/><rect x="0.0" y="174.2" width="5.6" height="5.2" fill="#cbcbcb"/><rect x="5.5" y="174.2" width="5.6" height="5.2" fill="#c0c0c0"/><rect x="11.1" y="174.2" width="5.6" height="5.2" fill="#c0c0c0"/><rect x="16.6" y="174.2" width="5.6" height="5.2" fill="#c0c0c0"/><rect x="22.2" y="174.2" width="5.6" height="5.2" fill="#c1c1c1"/><rect x="27.8" y="174.2" width="5.6" height="5.2" fill="#c9c9c9"/><rect x="33.3" y="174.2" width="5.6" height="5.2" fill="#cfcfcf"/><rect x="38.9" y="174.2" width="5.6" height="5.2" fill="#d2d2d2"/><rect x="44.4" y="174.2" width="5.6" height="5.2" fill="#e1e1e1"/><rect x="49.9" y="174.2" width="5.6" height="5.2" fill="#eaeaea"/><rect x="0.0" y="179.4" width="5.6" height="5.2" fill="#c4c4c4"/><rect x="5.5" y="179.4" width="5.6" height="5.2" fill="#cbcbcb"/><rect x="11.1" y="179.4" width="5.6" height="5.2" fill="#d4d4d4"/><rect x="16.6" y="179.4" width="5.6" height="5.2" fill="#c6c6c6"/><rect x="22.2" y="179.4" width="5.6" height="5.2" fill="#cfcfcf"/><rect x="27.8" y="179.4" width="5.6" height="5.2" fill="#e2e2e2"/><rect x="33.3" y="179.4" width="5.6" height="5.2" fill="#e8e8e8"/><rect x="38.9" y="179.4" width="5.6" height="5.2" fill="#f2f2f2"/><rect x="44.4" y="179.4" width="5.6" height="5.2" fill="#ececec"/><rect x="49.9" y="179.4" width="5.6" height="5.2" fill="#fafafa"/><rect x="0.0" y="184.5" width="5.6" height="5.2" fill="#bababa"/><rect x="5.5" y="184.5" width="5.6" height="5.2" fill="#b8b8b8"/><rect x="11.1" y="184.5" width="5.6" height="5.2" fill="#c6c6c6"/><rect x="16.6" y="184.5" width="5.6" height="5.2" fill="#dddddd"/><rect x="22.2" y="184.5" width="5.6" height="5.2" fill="#f7f7f7"/><rect x="27.8" y="184.5" width="5.6" height="5.2" fill="#f5f5f5"/><rect x="33.3" y="184.5" width="5.6" height="5.2" fill="#f6f6f6"/><rect x="38.9" y="184.5" width="5.6" height="5.2" fill="#fcfcfc"/><rect x="44.4" y="184.5" width="5.6" height="5.2" fill="#fcfcfc"/><rect x="49.9" y="184.5" width="5.6" height="5.2" fill="#fcfcfc"/><rect x="0.0" y="189.6" width="5.6" height="5.2" fill="#d2d2d2"/><rect x="5.5" y="189.6" width="5.6" height="5.2" fill="#dfdfdf"/><rect x="11.1" y="189.6" width="5.6" height="5.2" fill="#e4e4e4"/><rect x="16.6" y="189.6" width="5.6" height="5.2" fill="#eeeeee"/><rect x="22.2" y="189.6" width="5.6" height="5.2" fill="#fbfbfb"/><rect x="27.8" y="189.6" width="5.6" height="5.2" fill="#f5f5f5"/><rect x="33.3" y="189.6" width="5.6" height="5.2" fill="#fcfcfc"/><rect x="38.9" y="189.6" width="5.6" height="5.2" fill="#fcfcfc"/><rect x="44.4" y="189.6" width="5.6" height="5.2" fill="#fcfcfc"/><rect x="49.9" y="189.6" width="5.6" height="5.2" fill="#f9f9f9"/><rect x="0.0" y="194.8" width="5.6" height="5.2" fill="#cecece"/><rect x="5.5" y="194.8" width="5.6" height="5.2" fill="#d2d2d2"/><rect x="11.1" y="194.8" width="5.6" height="5.2" fill="#c2c2c2"/><rect x="16.6" y="194.8" width="5.6" height="5.2" fill="#c5c5c5"/><rect x="22.2" y="194.8" width="5.6" height="5.2" fill="#c9c9c9"/><rect x="27.8" y="194.8" width="5.6" height="5.2" fill="#bebebe"/><rect x="33.3" y="194.8" width="5.6" height="5.2" fill="#bcbcbc"/><rect x="38.9" y="194.8" width="5.6" height="5.2" fill="#bebebe"/><rect x="44.4" y="194.8" width="5.6" height="5.2" fill="#c6c6c6"/><rect x="49.9" y="194.8" width="5.6" height="5.2" fill="#e2e2e2"/><rect x="0.0" y="199.9" width="5.6" height="5.2" fill="#cbcbcb"/><rect x="5.5" y="199.9" width="5.6" height="5.2" fill="#c9c9c9"/><rect x="11.1" y="199.9" width="5.6" height="5.2" fill="#c2c2c2"/><rect x="16.6" y="199.9" width="5.6" height="5.2" fill="#c4c4c4"/><rect x="22.2" y="199.9" width="5.6" height="5.2" fill="#c3c3c3"/><rect x="27.8" y="199.9" width="5.6" height="5.2" fill="#b2b2b2"/><rect x="33.3" y="199.9" width="5.6" height="5.2" fill="#adadad"/><rect x="38.9" y="199.9" width="5.6" height="5.2" fill="#b3b3b3"/><rect x="44.4" y="199.9" width="5.6" height="5.2" fill="#bebebe"/><rect x="49.9" y="199.9" width="5.6" height="5.2" fill="#d7d7d7"/><rect x="0.0" y="205.0" width="5.6" height="5.2" fill="#cacaca"/><rect x="5.5" y="205.0" width="5.6" height="5.2" fill="#bfbfbf"/><rect x="11.1" y="205.0" width="5.6" height="5.2" fill="#c3c3c3"/><rect x="16.6" y="205.0" width="5.6" height="5.2" fill="#bebebe"/><rect x="22.2" y="205.0" width="5.6" height="5.2" fill="#c6c6c6"/><rect x="27.8" y="205.0" width="5.6" height="5.2" fill="#c2c2c2"/><rect x="33.3" y="205.0" width="5.6" height="5.2" fill="#d2d2d2"/><rect x="38.9" y="205.0" width="5.6" height="5.2" fill="#d0d0d0"/><rect x="44.4" y="205.0" width="5.6" height="5.2" fill="#e0e0e0"/><rect x="49.9" y="205.0" width="5.6" height="5.2" fill="#eeeeee"/><rect x="0.0" y="210.1" width="5.6" height="5.2" fill="#cbcbcb"/><rect x="5.5" y="210.1" width="5.6" height="5.2" fill="#c4c4c4"/><rect x="11.1" y="210.1" width="5.6" height="5.2" fill="#cbcbcb"/><rect x="16.6" y="210.1" width="5.6" height="5.2" fill="#c2c2c2"/><rect x="22.2" y="210.1" width="5.6" height="5.2" fill="#cfcfcf"/><rect x="27.8" y="210.1" width="5.6" height="5.2" fill="#e3e3e3"/><rect x="33.3" y="210.1" width="5.6" height="5.2" fill="#ebebeb"/><rect x="38.9" y="210.1" width="5.6" height="5.2" fill="#f6f6f6"/><rect x="44.4" y="210.1" width="5.6" height="5.2" fill="#ededed"/><rect x="49.9" y="210.1" width="5.6" height="5.2" fill="#fcfcfc"/></svg>
<div style="left:538.5px;top:369.8px;width:59px;height:1.4px;background:#7d8fa8;"></div>
<svg style="left:423px;top:232px" width="639" height="343" viewBox="423 232 639 343"><path d="M474.80 352.00V575.00M538.50 352.00V575.00M657.30 352.00V575.00M705.50 352.00V575.00M735.00 365.00V575.00M765.00 352.00V575.00M824.00 352.00V575.00M867.00 352.00V575.00M919.50 352.00V575.00M962.50 352.00V575.00M1004.60 352.00V575.00" fill="none" stroke="#444" stroke-width="0.8"/><path d="M597.70 352.00V575.00" fill="none" stroke="#666" stroke-width="0.8"/><path d="M474.80 352.00V370.50M538.50 352.00V370.50M597.70 352.00V370.50M657.30 352.00V370.50M705.50 352.00V370.50M765.00 352.00V370.50M824.00 352.00V370.50M867.00 352.00V370.50M919.50 352.00V370.50M962.50 352.00V370.50M1004.60 352.00V370.50" fill="none" stroke="#111" stroke-width="0.9"/><path d="M432.60 352.00V575.00M1045.00 352.00V575.00" fill="none" stroke="#222" stroke-width="0.9"/><path d="M597.00 371.00V575.00" fill="none" stroke="#6a6a6a" stroke-width="1.4"/></svg>
<div style="left:1060px;top:140px;width:2px;height:435px;background:#fff;"></div>
</div></body></html>
